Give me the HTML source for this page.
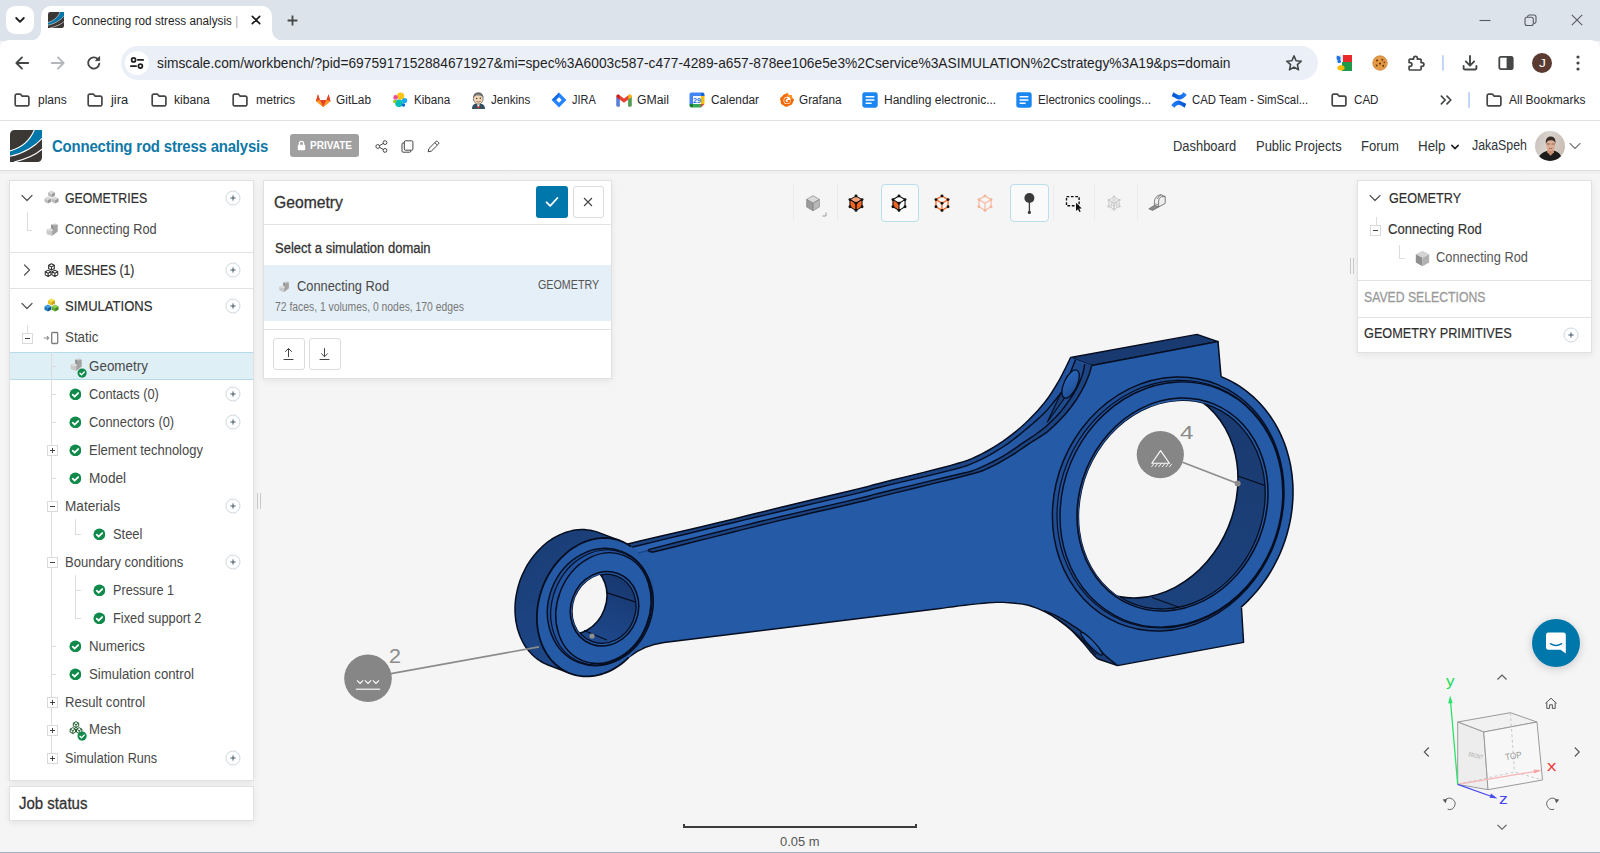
<!DOCTYPE html>
<html lang="en"><head><meta charset="utf-8"><title>Connecting rod stress analysis | SimScale</title>
<style>
html,body{margin:0;padding:0;}
body{width:1600px;height:853px;overflow:hidden;background:#f5f5f5;font-family:"Liberation Sans",sans-serif;}
#root{position:relative;width:1600px;height:853px;overflow:hidden;background:#f5f5f5;}
.a{position:absolute;display:block;}
.t{position:absolute;white-space:pre;transform-origin:0 50%;}
.p{position:absolute;background:#fff;border:1px solid #e1e1e1;box-sizing:border-box;box-shadow:0 2px 7px rgba(0,0,0,.07);}
</style></head>
<body><div id="root">
<!-- viewer_ui -->
<svg class="a" style="left:0;top:0" width="1600" height="853" viewBox="0 0 1600 853"><defs><linearGradient id="wallB" x1="0" y1="0" x2="0" y2="1"><stop offset="0" stop-color="#1a3b71"/><stop offset="1" stop-color="#1c427d"/></linearGradient><linearGradient id="wallS" x1="0" y1="0" x2="0" y2="1"><stop offset="0" stop-color="#183870"/><stop offset="1" stop-color="#1e498c"/></linearGradient><linearGradient id="sideS" x1="0" y1="0" x2="0.6" y2="1"><stop offset="0" stop-color="#193b72"/><stop offset="1" stop-color="#1f4b8e"/></linearGradient><linearGradient id="bolt" x1="0" y1="0" x2="1" y2="1"><stop offset="0" stop-color="#2c69bd"/><stop offset="1" stop-color="#1e4d94"/></linearGradient></defs>
<path d="M1070.6 357.5 L1197.0 334.4 L1218.0 341.6 L1091.7 365.6 L1084.9 364.3 L1075.4 360.2Z" fill="#193a70" stroke="none" stroke-width="1.3" stroke-linejoin="round" />
<path d="M1070.6 357.5 L1197.0 334.4 L1218.0 341.6 L1091.7 365.6Z" fill="none" stroke="#060d1f" stroke-width="1.43" stroke-linejoin="round" />
<path d="M600.0 550.6 L604.8 549.4 L611.2 547.9 L619.2 546.0 L628.8 543.7 L640.0 541.0 L653.8 537.8 L670.1 534.0 L687.5 529.9 L704.6 525.9 L720.0 522.3 L733.0 519.2 L744.5 516.3 L755.5 513.5 L767.0 510.7 L780.0 507.5 L795.7 503.7 L813.4 499.5 L831.4 495.2 L847.5 491.4 L860.0 488.4 L867.0 486.7 L869.9 485.9 L871.3 485.5 L873.8 484.8 L880.0 483.2 L891.5 480.3 L906.5 476.6 L922.7 472.6 L938.0 468.8 L950.0 465.6 L958.1 463.3 L963.7 461.6 L967.9 460.2 L971.8 458.6 L976.4 456.5 L981.8 453.9 L987.2 451.0 L992.6 447.8 L997.8 444.6 L1002.8 441.3 L1007.6 437.9 L1012.2 434.4 L1016.7 430.8 L1020.9 427.2 L1024.8 423.7 L1028.4 420.3 L1031.8 416.9 L1035.0 413.6 L1037.9 410.4 L1040.6 407.3 L1043.0 404.4 L1045.2 401.8 L1047.1 399.2 L1049.1 396.5 L1051.1 393.5 L1053.2 390.2 L1055.4 386.6 L1057.6 383.0 L1059.7 379.3 L1061.7 375.6 L1063.7 371.7 L1065.8 367.5 L1067.8 363.4 L1069.4 360.0 L1070.6 357.5 L1091.7 365.6 L1100.0 560.0 L940.0 598.0 L664.0 634.0 L600.0 648.0Z" fill="#245aa6" stroke="none" stroke-width="1.3" stroke-linejoin="round" />
<linearGradient id="stripO" gradientUnits="userSpaceOnUse" x1="940" y1="0" x2="1070" y2="0"><stop offset="0" stop-color="#1c4482"/><stop offset="1" stop-color="#2255a2"/></linearGradient>
<path d="M600.0 550.6 L604.8 549.4 L611.2 547.9 L619.2 546.0 L628.8 543.7 L640.0 541.0 L653.8 537.8 L670.1 534.0 L687.5 529.9 L704.6 525.9 L720.0 522.3 L733.0 519.2 L744.5 516.3 L755.5 513.5 L767.0 510.7 L780.0 507.5 L795.7 503.7 L813.4 499.5 L831.4 495.2 L847.5 491.4 L860.0 488.4 L867.0 486.7 L869.9 485.9 L871.3 485.5 L873.8 484.8 L880.0 483.2 L891.5 480.3 L906.5 476.6 L922.7 472.6 L938.0 468.8 L950.0 465.6 L958.1 463.3 L963.7 461.6 L967.9 460.2 L971.8 458.6 L976.4 456.5 L981.8 453.9 L987.2 451.0 L992.6 447.8 L997.8 444.6 L1002.8 441.3 L1007.6 437.9 L1012.2 434.4 L1016.7 430.8 L1020.9 427.2 L1024.8 423.7 L1028.4 420.3 L1031.8 416.9 L1035.0 413.6 L1037.9 410.4 L1040.6 407.3 L1043.0 404.4 L1045.2 401.8 L1047.1 399.2 L1049.1 396.5 L1051.1 393.5 L1053.2 390.2 L1055.4 386.6 L1057.6 383.0 L1059.7 379.3 L1061.7 375.6 L1063.7 371.7 L1065.8 367.5 L1067.8 363.4 L1069.4 360.0 L1070.6 357.5 L1075.4 359.8 L1074.7 361.7 L1073.7 364.3 L1072.5 367.4 L1071.2 370.5 L1070.1 373.5 L1069.1 376.3 L1068.1 379.1 L1067.1 381.9 L1066.1 384.6 L1064.8 387.2 L1063.4 389.6 L1061.9 391.8 L1060.2 394.0 L1058.4 396.3 L1056.4 398.8 L1054.2 401.5 L1051.9 404.4 L1049.4 407.4 L1046.7 410.5 L1043.7 413.6 L1040.4 416.8 L1036.7 420.1 L1032.9 423.5 L1028.9 426.9 L1024.8 430.3 L1020.7 433.7 L1016.4 437.1 L1012.1 440.5 L1007.5 443.8 L1002.8 447.0 L997.8 450.1 L992.6 453.3 L987.2 456.3 L981.8 459.1 L976.4 461.6 L971.8 463.6 L967.9 465.2 L963.7 466.6 L958.1 468.2 L950.0 470.4 L938.0 473.4 L922.7 477.1 L906.5 480.9 L891.5 484.4 L880.0 487.2 L873.8 488.8 L871.3 489.5 L869.9 490.0 L867.0 490.8 L860.0 492.6 L847.5 495.6 L831.4 499.4 L813.4 503.6 L795.7 507.8 L780.0 511.5 L767.0 514.6 L755.5 517.3 L744.5 519.9 L733.0 522.7 L720.0 525.8 L704.6 529.5 L687.5 533.7 L670.1 537.9 L653.8 541.9 L640.0 545.2 L628.8 547.9 L619.2 550.3 L611.2 552.2 L604.8 553.8 L600.0 555.0Z" fill="url(#stripO)" stroke="none" stroke-width="1.3" stroke-linejoin="round" />
<linearGradient id="stripM" gradientUnits="userSpaceOnUse" x1="990" y1="0" x2="1062" y2="0"><stop offset="0" stop-color="#2960b0"/><stop offset="1" stop-color="#1e4a8e"/></linearGradient>
<path d="M600.0 555.0 L604.8 553.8 L611.2 552.2 L619.2 550.3 L628.8 547.9 L640.0 545.2 L653.8 541.9 L670.1 537.9 L687.5 533.7 L704.6 529.5 L720.0 525.8 L733.0 522.7 L744.5 519.9 L755.5 517.3 L767.0 514.6 L780.0 511.5 L795.7 507.8 L813.4 503.6 L831.4 499.4 L847.5 495.6 L860.0 492.6 L867.0 490.8 L869.9 490.0 L871.3 489.5 L873.8 488.8 L880.0 487.2 L891.5 484.4 L906.5 480.9 L922.7 477.1 L938.0 473.4 L950.0 470.4 L958.1 468.2 L963.7 466.6 L967.9 465.2 L971.8 463.6 L976.4 461.6 L981.8 459.1 L987.2 456.3 L992.6 453.3 L997.8 450.1 L1002.8 447.0 L1007.5 443.8 L1012.1 440.5 L1016.4 437.1 L1020.7 433.7 L1024.8 430.3 L1028.9 426.9 L1032.9 423.5 L1036.7 420.1 L1040.4 416.8 L1043.7 413.6 L1046.7 410.5 L1049.4 407.4 L1051.9 404.4 L1054.2 401.5 L1056.4 398.8 L1058.4 396.3 L1060.2 394.0 L1061.9 391.8 L1063.4 389.6 L1064.8 387.2 L1066.1 384.6 L1067.1 381.9 L1068.1 379.1 L1069.1 376.3 L1070.1 373.5 L1071.2 370.5 L1072.5 367.4 L1073.7 364.3 L1074.7 361.7 L1075.4 359.8 L1084.9 364.0 L1084.5 365.7 L1084.1 368.0 L1083.4 370.8 L1082.7 373.8 L1081.7 376.7 L1080.6 379.6 L1079.3 382.7 L1077.8 385.9 L1076.2 389.2 L1074.3 392.5 L1072.1 396.0 L1069.7 399.7 L1067.1 403.4 L1064.4 407.0 L1061.7 410.4 L1059.0 413.6 L1056.2 416.7 L1053.3 419.6 L1050.5 422.3 L1047.9 424.8 L1045.4 427.0 L1043.1 428.9 L1040.8 430.7 L1038.6 432.3 L1036.3 434.0 L1034.2 435.5 L1032.2 436.8 L1030.2 438.1 L1027.8 439.7 L1024.8 441.6 L1021.1 444.1 L1017.0 447.1 L1012.4 450.2 L1007.6 453.4 L1002.8 456.3 L997.7 459.1 L992.3 462.0 L986.8 464.7 L981.4 467.2 L976.4 469.3 L972.7 470.7 L970.2 471.5 L967.4 472.2 L962.9 473.2 L955.3 475.0 L942.8 478.0 L926.4 481.9 L908.7 486.1 L892.4 490.0 L880.0 493.0 L873.4 494.6 L870.9 495.4 L869.7 495.8 L867.0 496.5 L860.0 498.2 L847.5 501.1 L831.4 504.9 L813.4 509.0 L795.7 513.1 L780.0 516.8 L766.9 519.9 L755.0 522.8 L743.8 525.6 L732.3 528.4 L720.0 531.5 L706.3 534.9 L691.8 538.6 L677.0 542.3 L662.9 545.9 L650.0 549.2 L637.9 552.4 L626.2 555.6 L615.4 558.6 L606.5 561.1 L600.0 562.9Z" fill="url(#stripM)" stroke="none" stroke-width="1.3" stroke-linejoin="round" />
<path d="M600.0 562.9 L606.5 561.1 L615.4 558.6 L626.2 555.6 L637.9 552.4 L650.0 549.2 L662.9 545.9 L677.0 542.3 L691.8 538.6 L706.3 534.9 L720.0 531.5 L732.3 528.4 L743.8 525.6 L755.0 522.8 L766.9 519.9 L780.0 516.8 L795.7 513.1 L813.4 509.0 L831.4 504.9 L847.5 501.1 L860.0 498.2 L867.0 496.5 L869.7 495.8 L870.9 495.4 L873.4 494.6 L880.0 493.0 L892.4 490.0 L908.7 486.1 L926.4 481.9 L942.8 478.0 L955.3 475.0 L962.9 473.2 L967.4 472.2 L970.2 471.5 L972.7 470.7 L976.4 469.3 L981.4 467.2 L986.8 464.7 L992.3 462.0 L997.7 459.1 L1002.8 456.3 L1007.6 453.4 L1012.4 450.2 L1017.0 447.1 L1021.1 444.1 L1024.8 441.6 L1027.8 439.7 L1030.2 438.1 L1032.2 436.8 L1034.2 435.5 L1036.3 434.0 L1038.6 432.3 L1040.8 430.7 L1043.1 428.9 L1045.4 427.0 L1047.9 424.8 L1050.5 422.3 L1053.3 419.6 L1056.2 416.7 L1059.0 413.6 L1061.7 410.4 L1064.4 407.0 L1067.1 403.4 L1069.7 399.7 L1072.1 396.0 L1074.3 392.5 L1076.2 389.2 L1077.8 385.9 L1079.3 382.7 L1080.6 379.6 L1081.7 376.7 L1082.7 373.8 L1083.4 370.8 L1084.1 368.0 L1084.5 365.7 L1084.9 364.0 L1091.7 365.6 L1091.1 367.5 L1090.4 370.1 L1089.5 373.2 L1088.3 376.5 L1087.0 379.8 L1085.5 383.2 L1083.7 386.8 L1081.8 390.5 L1079.7 394.2 L1077.5 397.8 L1075.2 401.3 L1072.7 404.8 L1070.1 408.2 L1067.5 411.5 L1064.8 414.7 L1062.0 417.8 L1059.1 420.8 L1056.2 423.6 L1053.5 426.2 L1051.1 428.4 L1049.3 430.0 L1048.0 431.2 L1046.9 432.1 L1045.5 433.1 L1043.7 434.4 L1041.3 436.0 L1038.6 437.7 L1035.6 439.6 L1032.4 441.5 L1029.2 443.6 L1025.9 445.8 L1022.6 448.1 L1019.1 450.5 L1015.5 453.0 L1011.6 455.4 L1007.5 457.9 L1003.1 460.4 L998.6 463.0 L994.1 465.4 L989.6 467.5 L986.2 469.1 L983.9 470.2 L981.1 471.2 L976.2 472.7 L967.6 475.0 L953.2 478.7 L934.0 483.4 L913.3 488.5 L894.2 493.1 L880.0 496.6 L872.6 498.5 L870.0 499.2 L869.1 499.5 L866.8 500.2 L860.0 501.8 L847.5 504.7 L831.4 508.4 L813.4 512.6 L795.7 516.7 L780.0 520.4 L766.8 523.6 L754.9 526.6 L743.6 529.4 L732.2 532.3 L720.0 535.4 L705.9 538.9 L690.3 542.8 L674.9 546.7 L661.6 550.0 L652.0 552.2 L648.0 552.9 L648.3 552.5 L650.4 551.5 L651.5 550.9 L649.0 551.2 L641.4 553.0 L630.4 555.6 L618.3 558.6 L607.4 561.4 L600.0 563.2Z" fill="#1c4482" stroke="none" stroke-width="1.3" stroke-linejoin="round" />
<path d="M1042.4 610.6 L1045.6 612.1 L1048.8 613.8 L1052.0 615.7 L1055.2 617.8 L1058.4 620.0 L1061.6 622.3 L1064.7 624.6 L1067.5 626.9 L1070.2 629.2 L1072.7 631.6 L1075.1 634.1 L1077.4 636.5 L1079.6 638.8 L1081.6 641.0 L1083.5 643.1 L1085.2 645.1 L1086.8 647.1 L1088.3 648.9 L1089.7 650.6 L1091.0 652.2 L1092.3 653.6 L1093.6 655.0 L1094.8 656.2 L1095.9 657.3 L1096.8 658.1 L1097.5 658.8 L1117.5 665.6 L1116.4 664.7 L1114.8 663.4 L1112.9 661.9 L1110.9 660.3 L1108.8 658.6 L1106.9 656.9 L1105.1 655.2 L1103.3 653.4 L1101.5 651.6 L1099.6 649.7 L1097.7 647.7 L1095.7 645.7 L1093.6 643.6 L1091.5 641.3 L1089.3 639.0 L1087.1 636.8 L1084.8 634.6 L1082.5 632.5 L1080.1 630.6 L1077.5 628.7 L1074.9 626.9 L1072.3 625.3 L1069.8 623.7 L1067.5 622.2 L1065.4 620.9 L1063.4 619.7 L1061.6 618.6 L1059.7 617.5 L1057.9 616.6 L1056.0 615.6 L1053.9 614.6 L1051.6 613.6 L1049.3 612.7 L1047.1 611.8 L1045.3 611.1 L1044.0 610.6Z" fill="#1b3f79" stroke="none" stroke-width="1.3" stroke-linejoin="round" />
<path d="M600.0 563.2 L607.4 561.4 L618.3 558.6 L630.4 555.6 L641.4 553.0 L649.0 551.2 L651.5 550.9 L650.4 551.5 L648.3 552.5 L648.0 552.9 L652.0 552.2 L661.6 550.0 L674.9 546.7 L690.3 542.8 L705.9 538.9 L720.0 535.4 L732.2 532.3 L743.6 529.4 L754.9 526.6 L766.8 523.6 L780.0 520.4 L795.7 516.7 L813.4 512.6 L831.4 508.4 L847.5 504.7 L860.0 501.8 L866.8 500.2 L869.1 499.5 L870.0 499.2 L872.6 498.5 L880.0 496.6 L894.2 493.1 L913.3 488.5 L934.0 483.4 L953.2 478.7 L967.6 475.0 L976.2 472.7 L981.1 471.2 L983.9 470.2 L986.2 469.1 L989.6 467.5 L994.1 465.4 L998.6 463.0 L1003.1 460.4 L1007.5 457.9 L1011.6 455.4 L1015.5 453.0 L1019.1 450.5 L1022.6 448.1 L1025.9 445.8 L1029.2 443.6 L1032.4 441.5 L1035.6 439.6 L1038.6 437.7 L1041.3 436.0 L1043.7 434.4 L1045.5 433.1 L1046.9 432.1 L1048.0 431.2 L1049.3 430.0 L1051.1 428.4 L1053.5 426.2 L1056.2 423.6 L1059.1 420.8 L1062.0 417.8 L1064.8 414.7 L1067.5 411.5 L1070.1 408.2 L1072.7 404.8 L1075.2 401.3 L1077.5 397.8 L1079.7 394.2 L1081.8 390.5 L1083.7 386.8 L1085.5 383.2 L1087.0 379.8 L1088.3 376.5 L1089.5 373.2 L1090.4 370.1 L1091.1 367.5 L1091.7 365.6 L1218.0 341.6 L1221.0 376.0 L1220.7 376.5 L1224.6 378.1 L1228.4 379.9 L1232.2 381.9 L1235.9 384.0 L1239.5 386.2 L1243.0 388.6 L1246.4 391.1 L1249.7 393.8 L1253.0 396.6 L1256.1 399.5 L1259.1 402.5 L1262.0 405.7 L1264.8 409.0 L1267.5 412.4 L1270.1 416.0 L1272.5 419.6 L1274.9 423.4 L1277.0 427.2 L1279.1 431.1 L1281.0 435.2 L1282.8 439.3 L1284.5 443.5 L1286.0 447.7 L1287.3 452.1 L1288.5 456.5 L1289.6 460.9 L1290.6 465.4 L1291.3 470.0 L1292.0 474.6 L1292.4 479.2 L1292.8 483.9 L1293.0 488.6 L1293.0 493.3 L1292.9 498.1 L1292.6 502.8 L1292.2 507.5 L1291.6 512.3 L1290.9 517.0 L1290.0 521.7 L1289.0 526.4 L1287.8 531.0 L1286.5 535.7 L1285.1 540.3 L1283.5 544.8 L1281.8 549.3 L1279.9 553.7 L1277.9 558.1 L1275.7 562.4 L1273.5 566.7 L1271.1 570.9 L1268.6 575.0 L1265.9 579.0 L1263.2 582.9 L1260.3 586.7 L1257.3 590.4 L1254.2 594.0 L1251.0 597.5 L1247.8 600.9 L1244.4 604.2 L1240.9 607.3 L1241.5 608.0 L1243.6 642.4 L1117.5 665.6 L1116.4 664.7 L1114.8 663.4 L1112.9 661.9 L1110.9 660.3 L1108.8 658.6 L1106.9 656.9 L1105.1 655.2 L1103.3 653.4 L1101.5 651.6 L1099.6 649.7 L1097.7 647.7 L1095.7 645.7 L1093.6 643.6 L1091.5 641.3 L1089.3 639.0 L1087.1 636.8 L1084.8 634.6 L1082.5 632.5 L1080.1 630.6 L1077.5 628.7 L1074.9 626.9 L1072.3 625.3 L1069.8 623.7 L1067.5 622.2 L1065.4 620.9 L1063.4 619.7 L1061.6 618.6 L1059.7 617.5 L1057.9 616.6 L1056.0 615.6 L1053.9 614.6 L1051.6 613.6 L1049.3 612.7 L1047.1 611.8 L1045.3 611.1 L1044.0 610.6 L1042.4 610.6 L1039.2 609.1 L1036.0 607.9 L1032.9 606.8 L1030.0 605.8 L1027.3 605.0 L1024.9 604.5 L1022.5 604.1 L1020.1 603.8 L1017.7 603.6 L1015.0 603.3 L1012.2 603.0 L1009.3 602.8 L1006.4 602.6 L1003.2 602.4 L999.9 602.4 L996.3 602.4 L992.4 602.6 L988.2 602.8 L983.9 603.2 L979.3 603.6 L974.7 604.1 L970.0 604.6 L964.9 605.2 L959.2 605.9 L953.4 606.7 L947.9 607.4 L943.3 608.1 L940.0 608.5 L664.0 642.6 L652.0 644.6 L641.0 648.6 L628.8 657.3 L600.0 662.0Z" fill="#245aa6" stroke="none" stroke-width="1.3" stroke-linejoin="round" />
<ellipse cx="1169.50" cy="504.50" rx="120.87" ry="137.85" transform="rotate(22.5 1169.50 504.50)" fill="#245aa6" stroke="none" stroke-width="1.3" />
<path d="M600.0 550.6 L604.8 549.4 L611.2 547.9 L619.2 546.0 L628.8 543.7 L640.0 541.0 L653.8 537.8 L670.1 534.0 L687.5 529.9 L704.6 525.9 L720.0 522.3 L733.0 519.2 L744.5 516.3 L755.5 513.5 L767.0 510.7 L780.0 507.5 L795.7 503.7 L813.4 499.5 L831.4 495.2 L847.5 491.4 L860.0 488.4 L867.0 486.7 L869.9 485.9 L871.3 485.5 L873.8 484.8 L880.0 483.2 L891.5 480.3 L906.5 476.6 L922.7 472.6 L938.0 468.8 L950.0 465.6 L958.1 463.3 L963.7 461.6 L967.9 460.2 L971.8 458.6 L976.4 456.5 L981.8 453.9 L987.2 451.0 L992.6 447.8 L997.8 444.6 L1002.8 441.3 L1007.6 437.9 L1012.2 434.4 L1016.7 430.8 L1020.9 427.2 L1024.8 423.7 L1028.4 420.3 L1031.8 416.9 L1035.0 413.6 L1037.9 410.4 L1040.6 407.3 L1043.0 404.4 L1045.2 401.8 L1047.1 399.2 L1049.1 396.5 L1051.1 393.5 L1053.2 390.2 L1055.4 386.6 L1057.6 383.0 L1059.7 379.3 L1061.7 375.6 L1063.7 371.7 L1065.8 367.5 L1067.8 363.4 L1069.4 360.0 L1070.6 357.5" fill="none" stroke="#060d1f" stroke-width="1.49" stroke-linejoin="round" />
<path d="M600.0 555.0 L604.8 553.8 L611.2 552.2 L619.2 550.3 L628.8 547.9 L640.0 545.2 L653.8 541.9 L670.1 537.9 L687.5 533.7 L704.6 529.5 L720.0 525.8 L733.0 522.7 L744.5 519.9 L755.5 517.3 L767.0 514.6 L780.0 511.5 L795.7 507.8 L813.4 503.6 L831.4 499.4 L847.5 495.6 L860.0 492.6 L867.0 490.8 L869.9 490.0 L871.3 489.5 L873.8 488.8 L880.0 487.2 L891.5 484.4 L906.5 480.9 L922.7 477.1 L938.0 473.4 L950.0 470.4 L958.1 468.2 L963.7 466.6 L967.9 465.2 L971.8 463.6 L976.4 461.6 L981.8 459.1 L987.2 456.3 L992.6 453.3 L997.8 450.1 L1002.8 447.0 L1007.5 443.8 L1012.1 440.5 L1016.4 437.1 L1020.7 433.7 L1024.8 430.3 L1028.9 426.9 L1032.9 423.5 L1036.7 420.1 L1040.4 416.8 L1043.7 413.6 L1046.7 410.5 L1049.4 407.4 L1051.9 404.4 L1054.2 401.5 L1056.4 398.8 L1058.4 396.3 L1060.2 394.0 L1061.9 391.8 L1063.4 389.6 L1064.8 387.2 L1066.1 384.6 L1067.1 381.9 L1068.1 379.1 L1069.1 376.3 L1070.1 373.5 L1071.2 370.5 L1072.5 367.4 L1073.7 364.3 L1074.7 361.7 L1075.4 359.8" fill="none" stroke="#060d1f" stroke-width="1.43" stroke-linejoin="round" />
<path d="M650.0 549.2 L662.9 545.9 L677.0 542.3 L691.8 538.6 L706.3 534.9 L720.0 531.5 L732.3 528.4 L743.8 525.6 L755.0 522.8 L766.9 519.9 L780.0 516.8 L795.7 513.1 L813.4 509.0 L831.4 504.9 L847.5 501.1 L860.0 498.2 L867.0 496.5 L869.7 495.8 L870.9 495.4 L873.4 494.6 L880.0 493.0 L892.4 490.0 L908.7 486.1 L926.4 481.9 L942.8 478.0 L955.3 475.0 L962.9 473.2 L967.4 472.2 L970.2 471.5 L972.7 470.7 L976.4 469.3 L981.4 467.2 L986.8 464.7 L992.3 462.0 L997.7 459.1 L1002.8 456.3 L1007.6 453.4 L1012.4 450.2 L1017.0 447.1 L1021.1 444.1 L1024.8 441.6 L1027.8 439.7 L1030.2 438.1 L1032.2 436.8 L1034.2 435.5 L1036.3 434.0 L1038.6 432.3 L1040.8 430.7 L1043.1 428.9 L1045.4 427.0 L1047.9 424.8 L1050.5 422.3 L1053.3 419.6 L1056.2 416.7 L1059.0 413.6 L1061.7 410.4 L1064.4 407.0 L1067.1 403.4 L1069.7 399.7 L1072.1 396.0 L1074.3 392.5 L1076.2 389.2 L1077.8 385.9 L1079.3 382.7 L1080.6 379.6 L1081.7 376.7 L1082.7 373.8 L1083.4 370.8 L1084.1 368.0 L1084.5 365.7 L1084.9 364.0" fill="none" stroke="#060d1f" stroke-width="1.43" stroke-linejoin="round" />
<path d="M652.0 552.2 L661.6 550.0 L674.9 546.7 L690.3 542.8 L705.9 538.9 L720.0 535.4 L732.2 532.3 L743.6 529.4 L754.9 526.6 L766.8 523.6 L780.0 520.4 L795.7 516.7 L813.4 512.6 L831.4 508.4 L847.5 504.7 L860.0 501.8 L866.8 500.2 L869.1 499.5 L870.0 499.2 L872.6 498.5 L880.0 496.6 L894.2 493.1 L913.3 488.5 L934.0 483.4 L953.2 478.7 L967.6 475.0 L976.2 472.7 L981.1 471.2 L983.9 470.2 L986.2 469.1 L989.6 467.5 L994.1 465.4 L998.6 463.0 L1003.1 460.4 L1007.5 457.9 L1011.6 455.4 L1015.5 453.0 L1019.1 450.5 L1022.6 448.1 L1025.9 445.8 L1029.2 443.6 L1032.4 441.5 L1035.6 439.6 L1038.6 437.7 L1041.3 436.0 L1043.7 434.4 L1045.5 433.1 L1046.9 432.1 L1048.0 431.2 L1049.3 430.0 L1051.1 428.4 L1053.5 426.2 L1056.2 423.6 L1059.1 420.8 L1062.0 417.8 L1064.8 414.7 L1067.5 411.5 L1070.1 408.2 L1072.7 404.8 L1075.2 401.3 L1077.5 397.8 L1079.7 394.2 L1081.8 390.5 L1083.7 386.8 L1085.5 383.2 L1087.0 379.8 L1088.3 376.5 L1089.5 373.2 L1090.4 370.1 L1091.1 367.5 L1091.7 365.6" fill="none" stroke="#060d1f" stroke-width="1.49" stroke-linejoin="round" />
<path d="M650 549.2 Q645.5 550.6 652 552.2" fill="none" stroke="#060d1f" stroke-width="1.3" stroke-linejoin="round" />
<path d="M1061.7 391.4 L1047.4 422 L1064.8 397.8Z" fill="#1a3f78" stroke="#060d1f" stroke-width="1.1" stroke-linejoin="round"/>
<ellipse cx="1070.6" cy="384" rx="6.6" ry="15.1" transform="rotate(24.6 1070.6 384)" fill="url(#bolt)" stroke="#060d1f" stroke-width="1.3"/>
<path d="M1091.7 365.6 L1218.0 341.6 L1221.0 376.0" fill="none" stroke="#060d1f" stroke-width="1.49" stroke-linejoin="round" />
<path d="M1220.7 376.5 L1224.6 378.1 L1228.4 379.9 L1232.2 381.9 L1235.9 384.0 L1239.5 386.2 L1243.0 388.6 L1246.4 391.1 L1249.7 393.8 L1253.0 396.6 L1256.1 399.5 L1259.1 402.5 L1262.0 405.7 L1264.8 409.0 L1267.5 412.4 L1270.1 416.0 L1272.5 419.6 L1274.9 423.4 L1277.0 427.2 L1279.1 431.1 L1281.0 435.2 L1282.8 439.3 L1284.5 443.5 L1286.0 447.7 L1287.3 452.1 L1288.5 456.5 L1289.6 460.9 L1290.6 465.4 L1291.3 470.0 L1292.0 474.6 L1292.4 479.2 L1292.8 483.9 L1293.0 488.6 L1293.0 493.3 L1292.9 498.1 L1292.6 502.8 L1292.2 507.5 L1291.6 512.3 L1290.9 517.0 L1290.0 521.7 L1289.0 526.4 L1287.8 531.0 L1286.5 535.7 L1285.1 540.3 L1283.5 544.8 L1281.8 549.3 L1279.9 553.7 L1277.9 558.1 L1275.7 562.4 L1273.5 566.7 L1271.1 570.9 L1268.6 575.0 L1265.9 579.0 L1263.2 582.9 L1260.3 586.7 L1257.3 590.4 L1254.2 594.0 L1251.0 597.5 L1247.8 600.9 L1244.4 604.2 L1240.9 607.3" fill="none" stroke="#060d1f" stroke-width="1.56" stroke-linejoin="round" />
<path d="M1241.5 608.0 L1243.6 642.4 L1117.5 665.6" fill="none" stroke="#060d1f" stroke-width="1.43" stroke-linejoin="round" />
<path d="M940.0 608.5 L943.3 608.1 L947.9 607.4 L953.4 606.7 L959.2 605.9 L964.9 605.2 L970.0 604.6 L974.7 604.1 L979.3 603.6 L983.9 603.2 L988.2 602.8 L992.4 602.6 L996.3 602.4 L999.9 602.4 L1003.2 602.4 L1006.4 602.6 L1009.3 602.8 L1012.2 603.0 L1015.0 603.3 L1017.7 603.6 L1020.1 603.8 L1022.5 604.1 L1024.9 604.5 L1027.3 605.0 L1030.0 605.8 L1032.9 606.8 L1036.0 607.9 L1039.2 609.1 L1042.4 610.6 L1045.6 612.1 L1048.8 613.8 L1052.0 615.7 L1055.2 617.8 L1058.4 620.0 L1061.6 622.3 L1064.7 624.6 L1067.5 626.9 L1070.2 629.2 L1072.7 631.6 L1075.1 634.1 L1077.4 636.5 L1079.6 638.8 L1081.6 641.0 L1083.5 643.1 L1085.2 645.1 L1086.8 647.1 L1088.3 648.9 L1089.7 650.6 L1091.0 652.2 L1092.3 653.6 L1093.6 655.0 L1094.8 656.2 L1095.9 657.3 L1096.8 658.1 L1097.5 658.8" fill="none" stroke="#060d1f" stroke-width="1.43" stroke-linejoin="round" />
<path d="M1044.0 610.6 L1045.3 611.1 L1047.1 611.8 L1049.3 612.7 L1051.6 613.6 L1053.9 614.6 L1056.0 615.6 L1057.9 616.6 L1059.7 617.5 L1061.6 618.6 L1063.4 619.7 L1065.4 620.9 L1067.5 622.2 L1069.8 623.7 L1072.3 625.3 L1074.9 626.9 L1077.5 628.7 L1080.1 630.6 L1082.5 632.5 L1084.8 634.6 L1087.1 636.8 L1089.3 639.0 L1091.5 641.3 L1093.6 643.6 L1095.7 645.7 L1097.7 647.7 L1099.6 649.7 L1101.5 651.6 L1103.3 653.4 L1105.1 655.2 L1106.9 656.9 L1108.8 658.6 L1110.9 660.3 L1112.9 661.9 L1114.8 663.4 L1116.4 664.7 L1117.5 665.6" fill="none" stroke="#060d1f" stroke-width="1.43" stroke-linejoin="round" />
<path d="M1097.5 658.8 L1117.5 665.6" fill="none" stroke="#060d1f" stroke-width="1.43" stroke-linejoin="round" />
<path d="M1058 619.5 Q1078 633 1096 655" fill="none" stroke="#060d1f" stroke-width="1.17" stroke-linejoin="round" />
<ellipse cx="1091.7" cy="643.8" rx="15.4" ry="2.9" transform="rotate(46.8 1091.7 643.8)" fill="url(#bolt)" stroke="#060d1f" stroke-width="1.2"/>
<path d="M940 608.5 L664 642.6 C651 644.3 640 648 628.8 657.3" fill="none" stroke="#060d1f" stroke-width="1.49" stroke-linejoin="round" />
<ellipse cx="1168.20" cy="504.00" rx="113.34" ry="129.20" transform="rotate(22.5 1168.20 504.00)" fill="#1f4e95" stroke="#060d1f" stroke-width="1.43" />
<ellipse cx="1170.20" cy="504.20" rx="110.88" ry="125.88" transform="rotate(22.5 1170.20 504.20)" fill="#2153a0" stroke="#060d1f" stroke-width="1.17" />
<ellipse cx="1171.40" cy="504.50" rx="108.94" ry="124.79" transform="rotate(22.5 1171.40 504.50)" fill="#245aa6" stroke="#060d1f" stroke-width="1.43" />
<ellipse cx="1172.50" cy="504.50" rx="93.06" ry="108.64" transform="rotate(22.5 1172.50 504.50)" fill="#245aa6" stroke="#060d1f" stroke-width="1.56" />
<clipPath id="clipHC"><ellipse cx="1172.20" cy="505.00" rx="90.55" ry="106.14" transform="rotate(22.5 1172.20 505.00)"/></clipPath>
<ellipse cx="1172.20" cy="505.00" rx="90.55" ry="106.14" transform="rotate(22.5 1172.20 505.00)" fill="url(#wallB)" stroke="#060d1f" stroke-width="1.3" />
<g clip-path="url(#clipHC)"><ellipse cx="1146.00" cy="493.00" rx="89.07" ry="107.50" transform="rotate(22.5 1146.00 493.00)" fill="#f5f5f5" stroke="#060d1f" stroke-width="1.56" /><path d="M1238.0 476.0 L1266.0 486.0" fill="none" stroke="#060d1f" stroke-width="1.3" stroke-linejoin="round" /><path d="M1152.0 597.5 L1181.0 608.0" fill="none" stroke="#060d1f" stroke-width="1.3" stroke-linejoin="round" /></g>
<path d="M515.0 610.8 L515.0 607.2 L515.2 603.6 L515.5 600.0 L516.0 596.4 L516.7 592.8 L517.5 589.2 L518.4 585.6 L519.5 582.1 L520.8 578.6 L522.2 575.1 L523.8 571.8 L525.4 568.5 L527.2 565.2 L529.2 562.1 L531.2 559.1 L533.4 556.2 L535.7 553.4 L538.1 550.7 L540.6 548.2 L543.1 545.8 L545.8 543.5 L548.5 541.4 L551.3 539.5 L554.2 537.7 L557.1 536.1 L560.1 534.6 L563.1 533.4 L566.1 532.3 L569.1 531.4 L572.2 530.6 L575.3 530.1 L578.3 529.8 L581.4 529.6 L584.4 529.6 L587.4 529.9 L590.4 530.3 L593.3 530.9 L596.1 531.6 L598.9 532.6 L620.8 541.0 L623.5 542.2 L626.2 543.5 L628.7 545.0 L631.2 546.7 L633.6 548.5 L635.8 550.5 L638.0 552.7 L640.0 555.0 L642.0 557.4 L643.8 560.0 L645.4 562.7 L646.9 565.5 L648.3 568.5 L649.5 571.6 L650.6 574.7 L651.6 578.0 L652.3 581.3 L653.0 584.7 L653.4 588.1 L653.7 591.6 L653.9 595.2 L653.9 598.8 L653.7 602.4 L653.4 606.0 L652.9 609.6 L652.2 613.2 L651.4 616.8 L650.5 620.4 L649.4 623.9 L648.1 627.4 L646.7 630.9 L645.1 634.2 L643.5 637.5 L641.7 640.8 L639.7 643.9 L637.7 646.9 L635.5 649.8 L633.2 652.6 L630.8 655.3 L628.3 657.8 L625.8 660.2 L623.1 662.5 L620.4 664.6 L617.6 666.5 L614.7 668.3 L611.8 669.9 L608.8 671.4 L605.8 672.6 L602.8 673.7 L599.8 674.6 L596.7 675.4 L593.6 675.9 L590.6 676.2 L587.5 676.4 L584.5 676.4 L581.5 676.1 L578.5 675.7 L575.6 675.1 L572.8 674.4 L570.0 673.4 L548.1 665.0 L545.4 663.8 L542.7 662.5 L540.2 661.0 L537.7 659.3 L535.3 657.5 L533.1 655.5 L530.9 653.3 L528.9 651.0 L526.9 648.6 L525.1 646.0 L523.5 643.3 L522.0 640.5 L520.6 637.5 L519.4 634.4 L518.3 631.3 L517.3 628.0 L516.6 624.7 L515.9 621.3 L515.5 617.9 L515.2 614.4Z" fill="url(#sideS)" stroke="none" stroke-width="1.3" stroke-linejoin="round" />
<path d="M570.0 673.4 L548.1 665.0 L545.4 663.8 L542.7 662.5 L540.2 661.0 L537.7 659.3 L535.3 657.5 L533.1 655.5 L530.9 653.3 L528.9 651.0 L526.9 648.6 L525.1 646.0 L523.5 643.3 L522.0 640.5 L520.6 637.5 L519.4 634.4 L518.3 631.3 L517.3 628.0 L516.6 624.7 L515.9 621.3 L515.5 617.9 L515.2 614.4 L515.0 610.8 L515.0 607.2 L515.2 603.6 L515.5 600.0 L516.0 596.4 L516.7 592.8 L517.5 589.2 L518.4 585.6 L519.5 582.1 L520.8 578.6 L522.2 575.1 L523.8 571.8 L525.4 568.5 L527.2 565.2 L529.2 562.1 L531.2 559.1 L533.4 556.2 L535.7 553.4 L538.1 550.7 L540.6 548.2 L543.1 545.8 L545.8 543.5 L548.5 541.4 L551.3 539.5 L554.2 537.7 L557.1 536.1 L560.1 534.6 L563.1 533.4 L566.1 532.3 L569.1 531.4 L572.2 530.6 L575.3 530.1 L578.3 529.8 L581.4 529.6 L584.4 529.6 L587.4 529.9 L590.4 530.3 L593.3 530.9 L596.1 531.6 L598.9 532.6 L620.8 541.0" fill="none" stroke="#060d1f" stroke-width="1.49" stroke-linejoin="round" />
<ellipse cx="595.40" cy="607.20" rx="56.45" ry="70.89" transform="rotate(21 595.40 607.20)" fill="#245aa6" stroke="none" stroke-width="1.3" />
<path d="M628.8 657.3 L626.1 659.9 L623.4 662.2 L620.5 664.5 L617.6 666.5 L614.5 668.4 L611.5 670.1 L608.4 671.6 L605.2 672.9 L602.0 674.0 L598.8 674.9 L595.6 675.6 L592.4 676.0 L589.2 676.3 L586.0 676.4 L582.8 676.3 L579.7 675.9 L576.6 675.4 L573.6 674.6 L570.6 673.6 L567.8 672.5 L565.0 671.1 L562.3 669.5 L559.7 667.8 L557.2 665.8 L554.8 663.7 L552.5 661.5 L550.4 659.0 L548.4 656.4 L546.6 653.7 L544.9 650.8 L543.3 647.8 L542.0 644.6 L540.7 641.4 L539.7 638.0 L538.8 634.5 L538.0 631.0 L537.5 627.4 L537.1 623.7 L536.9 620.0 L536.9 616.2 L537.1 612.4 L537.4 608.6 L537.9 604.8 L538.6 601.0 L539.5 597.3 L540.5 593.5 L541.7 589.8 L543.0 586.1 L544.5 582.5 L546.2 579.0 L548.0 575.6 L550.0 572.3 L552.1 569.0 L554.3 565.9 L556.7 562.9 L559.1 560.1 L561.7 557.3 L564.4 554.8 L567.2 552.4 L570.0 550.1 L573.0 548.1 L576.0 546.2 L579.0 544.5 L582.1 543.0 L585.3 541.6 L588.5 540.5 L591.7 539.6 L594.9 538.9 L598.1 538.4 L601.3 538.1 L604.5 538.0 L607.7 538.1 L610.8 538.4 L613.9 539.0 L616.9 539.7 L619.9 540.7 L622.8 541.8 L625.6 543.2 L628.3 544.7 L630.9 546.4" fill="none" stroke="#060d1f" stroke-width="1.82" stroke-linejoin="round" />
<ellipse cx="600.30" cy="607.00" rx="51.85" ry="59.53" transform="rotate(21 600.30 607.00)" fill="#1f4e95" stroke="#060d1f" stroke-width="1.43" />
<ellipse cx="601.40" cy="607.40" rx="49.31" ry="58.61" transform="rotate(21 601.40 607.40)" fill="#2153a0" stroke="#060d1f" stroke-width="1.17" />
<ellipse cx="603.40" cy="608.10" rx="46.14" ry="56.52" transform="rotate(21 603.40 608.10)" fill="#245aa6" stroke="#060d1f" stroke-width="1.43" />
<ellipse cx="604.50" cy="608.75" rx="33.65" ry="37.69" transform="rotate(21 604.50 608.75)" fill="#245aa6" stroke="#060d1f" stroke-width="1.56" />
<clipPath id="clipsHC"><ellipse cx="604.35" cy="608.80" rx="31.19" ry="34.96" transform="rotate(21 604.35 608.80)"/></clipPath>
<ellipse cx="604.35" cy="608.80" rx="31.19" ry="34.96" transform="rotate(21 604.35 608.80)" fill="url(#wallS)" stroke="#060d1f" stroke-width="1.3" />
<g clip-path="url(#clipsHC)"><ellipse cx="576.00" cy="599.00" rx="30.26" ry="35.65" transform="rotate(21 576.00 599.00)" fill="#f5f5f5" stroke="#060d1f" stroke-width="1.56" /><path d="M606.6 592.7 L636.0 602.2" fill="none" stroke="#060d1f" stroke-width="1.3" stroke-linejoin="round" /><path d="M584.0 630.5 L607.0 640.0" fill="none" stroke="#060d1f" stroke-width="1.17" stroke-linejoin="round" /></g>
<circle cx="592" cy="636" r="2.6" fill="#8f9092"/></svg>
<svg class="a" style="left:0;top:0" width="1600" height="853" viewBox="0 0 1600 853"><path d="M391 673.6 L539 646.9" stroke="#8c8c8c" stroke-width="1.6" fill="none"/><path d="M1182.5 462.3 L1237.6 483.6" stroke="#8c8c8c" stroke-width="1.6" fill="none"/><circle cx="1237.6" cy="483.6" r="3" fill="#8c8c8c"/><circle cx="368" cy="678.3" r="23.8" fill="#868686"/><circle cx="1160.3" cy="454.6" r="23.6" fill="#868686"/><path d="M357 680.4 l3.1 3 l3.1 -3 M364.9 680.4 l3.1 3 l3.1 -3 M372.8 680.4 l3.1 3 l3.1 -3" fill="none" stroke="#fff" stroke-width="1.1"/><path d="M355.8 689.2 H380.2" stroke="#fff" stroke-width="1.1"/><path d="M1160.6 450.6 L1169.4 463.2 H1151.8 Z" fill="none" stroke="#fff" stroke-width="1.1" stroke-linejoin="round"/><path d="M1151.4 467 l2.4 -3.2 m1.2 3.2 l2.4 -3.2 m1.2 3.2 l2.4 -3.2 m1.2 3.2 l2.4 -3.2 m1.2 3.2 l2.4 -3.2 m1.2 3.2 l2.4 -3.2" stroke="#fff" stroke-width=".9" fill="none"/></svg>
<span class="t" style="left:388.53px;top:644.1px;font-size:19.5px;line-height:25px;color:#8a8a8a;transform:scaleX(1.1004);">2</span>
<span class="t" style="left:1179.95px;top:420.3px;font-size:19px;line-height:25px;color:#8a8a8a;transform:scaleX(1.2762);">4</span>
<div class="a" style="left:683px;top:823.5px;width:234px;height:4px;border:2px solid #3c3c3c;border-top:none;box-sizing:border-box"></div>
<span class="t" style="left:780.06px;top:832.7px;font-size:13.4px;line-height:17px;color:#555;transform:scaleX(0.9659);">0.05 m</span>
<div class="a" style="left:793px;top:184px;width:1px;height:37px;background:#ececec"></div>
<div class="a" style="left:836.5px;top:184px;width:1px;height:37px;background:#ececec"></div>
<div class="a" style="left:1053px;top:184px;width:1px;height:37px;background:#ececec"></div>
<div class="a" style="left:1094px;top:184px;width:1px;height:37px;background:#ececec"></div>
<div class="a" style="left:1137px;top:184px;width:1px;height:37px;background:#ececec"></div>
<div class="a" style="left:880.5px;top:183.5px;width:38.5px;height:38.5px;background:#fafafa;border:1px solid #b9deec;border-radius:4px;box-sizing:border-box"></div>
<div class="a" style="left:1010.3px;top:183.5px;width:38.5px;height:38.5px;background:#fafafa;border:1px solid #b9deec;border-radius:4px;box-sizing:border-box"></div>
<svg class="a" style="left:801.5px;top:191px" width="22" height="24" viewBox="0 0 22 24" ><path d="M11.00 4.60 L17.38 8.40 L11.00 12.20 L4.62 8.40Z" fill="#d9d9d9"/><path d="M4.62 8.40 L11.00 12.20 L11.00 19.80 L4.62 16.00Z" fill="#9c9c9c"/><path d="M11.00 12.20 L17.38 8.40 L17.38 16.00 L11.00 19.80Z" fill="#b9b9b9"/><path d="M11.00 4.60 L17.38 8.40 L11.00 12.20 L4.62 8.40Z M4.62 8.40 L11.00 12.20 L11.00 19.80 L4.62 16.00Z M11.00 12.20 L17.38 8.40 L17.38 16.00 L11.00 19.80Z" fill="none" stroke="#8a8a8a" stroke-width=".7"/></svg>
<svg class="a" style="left:821.5px;top:212px" width="5" height="5" viewBox="0 0 5 5" ><path d="M0.5 4 H4 V0.5" fill="none" stroke="#999" stroke-width="1"/></svg>
<svg class="a" style="left:845px;top:191px" width="22" height="24" viewBox="0 0 22 24" ><path d="M11.00 5.00 L17.05 8.60 L11.00 12.20 L4.95 8.60Z" fill="#f9a27a"/><path d="M4.95 8.60 L11.00 12.20 L11.00 19.40 L4.95 15.80Z" fill="#f26522"/><path d="M11.00 12.20 L17.05 8.60 L17.05 15.80 L11.00 19.40Z" fill="#f26522"/><path d="M11.00 5.00 L17.05 8.60 L11.00 12.20 L4.95 8.60Z M4.95 8.60 L11.00 12.20 L11.00 19.40 L4.95 15.80Z M11.00 12.20 L17.05 8.60 L17.05 15.80 L11.00 19.40Z" fill="none" stroke="#111" stroke-width="1"/><circle cx="11.00" cy="5.00" r="1.45" fill="#111"/><circle cx="17.05" cy="8.60" r="1.45" fill="#111"/><circle cx="17.05" cy="15.80" r="1.45" fill="#111"/><circle cx="11.00" cy="19.40" r="1.45" fill="#111"/><circle cx="4.95" cy="15.80" r="1.45" fill="#111"/><circle cx="4.95" cy="8.60" r="1.45" fill="#111"/><circle cx="11.00" cy="12.20" r="1.45" fill="#111"/></svg>
<svg class="a" style="left:888.3px;top:191px" width="22" height="24" viewBox="0 0 22 24" ><path d="M11.00 5.00 L17.05 8.60 L11.00 12.20 L4.95 8.60Z" fill="#fff"/><path d="M4.95 8.60 L11.00 12.20 L11.00 19.40 L4.95 15.80Z" fill="#f26522"/><path d="M11.00 12.20 L17.05 8.60 L17.05 15.80 L11.00 19.40Z" fill="#fff"/><path d="M11.00 5.00 L17.05 8.60 L11.00 12.20 L4.95 8.60Z M4.95 8.60 L11.00 12.20 L11.00 19.40 L4.95 15.80Z M11.00 12.20 L17.05 8.60 L17.05 15.80 L11.00 19.40Z" fill="none" stroke="#111" stroke-width="1.1"/><circle cx="11.00" cy="5.00" r="1.45" fill="#111"/><circle cx="17.05" cy="8.60" r="1.45" fill="#111"/><circle cx="17.05" cy="15.80" r="1.45" fill="#111"/><circle cx="11.00" cy="19.40" r="1.45" fill="#111"/><circle cx="4.95" cy="15.80" r="1.45" fill="#111"/><circle cx="4.95" cy="8.60" r="1.45" fill="#111"/><circle cx="11.00" cy="12.20" r="1.45" fill="#111"/></svg>
<svg class="a" style="left:931px;top:191px" width="22" height="24" viewBox="0 0 22 24" ><path d="M11.00 5.00 L17.05 8.60 L11.00 12.20 L4.95 8.60Z M4.95 8.60 L11.00 12.20 L11.00 19.40 L4.95 15.80Z M11.00 12.20 L17.05 8.60 L17.05 15.80 L11.00 19.40Z" fill="none" stroke="#f26522" stroke-width="1.3"/><circle cx="11.00" cy="5.00" r="1.45" fill="#111"/><circle cx="17.05" cy="8.60" r="1.45" fill="#111"/><circle cx="17.05" cy="15.80" r="1.45" fill="#111"/><circle cx="11.00" cy="19.40" r="1.45" fill="#111"/><circle cx="4.95" cy="15.80" r="1.45" fill="#111"/><circle cx="4.95" cy="8.60" r="1.45" fill="#111"/><circle cx="11.00" cy="12.20" r="1.45" fill="#111"/></svg>
<svg class="a" style="left:974px;top:191px" width="22" height="24" viewBox="0 0 22 24" ><path d="M11.00 5.00 L17.05 8.60 L11.00 12.20 L4.95 8.60Z M4.95 8.60 L11.00 12.20 L11.00 19.40 L4.95 15.80Z M11.00 12.20 L17.05 8.60 L17.05 15.80 L11.00 19.40Z" fill="none" stroke="#f5b59a" stroke-width="1.1"/><circle cx="11.00" cy="5.00" r="1.45" fill="#f5b59a"/><circle cx="17.05" cy="8.60" r="1.45" fill="#f5b59a"/><circle cx="17.05" cy="15.80" r="1.45" fill="#f5b59a"/><circle cx="11.00" cy="19.40" r="1.45" fill="#f5b59a"/><circle cx="4.95" cy="15.80" r="1.45" fill="#f5b59a"/><circle cx="4.95" cy="8.60" r="1.45" fill="#f5b59a"/></svg>
<svg class="a" style="left:1019px;top:190px" width="21" height="25" viewBox="0 0 21 25" ><circle cx="10.4" cy="8" r="5" fill="#3a3a3a"/><path d="M10.4 12 V22" stroke="#3a3a3a" stroke-width="1.3"/><circle cx="10.4" cy="22.4" r="1.6" fill="#3a3a3a"/></svg>
<svg class="a" style="left:1062px;top:192px" width="22" height="22" viewBox="0 0 22 22" ><rect x="4.5" y="4.6" width="12.6" height="9.2" fill="none" stroke="#111" stroke-width="1.4" stroke-dasharray="2.7 1.7"/><path d="M14 10.8 L14 19 L16 17.2 L17.4 20 L18.7 19.4 L17.3 16.6 L19.8 16.4 Z" fill="#111"/></svg>
<svg class="a" style="left:1103.3px;top:191px" width="22" height="24" viewBox="0 0 22 24" ><path d="M11.00 6.00 L16.21 9.10 L11.00 12.20 L5.79 9.10Z M5.79 9.10 L11.00 12.20 L11.00 18.40 L5.79 15.30Z M11.00 12.20 L16.21 9.10 L16.21 15.30 L11.00 18.40Z" fill="none" stroke="#c4c4c4" stroke-width=".8"/><path d="M8.4 7.5 L13.6 10.6 M13.6 7.5 L8.4 10.6 M5.8 12.2 L11.0 15.3 M8.4 10.6 L8.4 16.8 M11.0 15.3 L16.2 12.2 M13.6 10.6 L13.6 16.8" stroke="#c9c9c9" stroke-width=".7" fill="none"/><circle cx="11.00" cy="6.00" r="1.45" fill="#cfcfcf"/><circle cx="16.21" cy="9.10" r="1.45" fill="#cfcfcf"/><circle cx="16.21" cy="15.30" r="1.45" fill="#cfcfcf"/><circle cx="11.00" cy="18.40" r="1.45" fill="#cfcfcf"/><circle cx="5.79" cy="15.30" r="1.45" fill="#cfcfcf"/><circle cx="5.79" cy="9.10" r="1.45" fill="#cfcfcf"/><circle cx="11.00" cy="12.20" r="1.45" fill="#cfcfcf"/></svg>
<svg class="a" style="left:1146px;top:192px" width="23" height="21" viewBox="0 0 23 21" ><path d="M8.4 11.2 C8.2 6 10.8 3 15.4 2.8 L19.2 4.6 V11.4 L12.6 15 L8.4 13.4 Z" fill="#f0f0f0" stroke="#6e6e6e" stroke-width=".9" stroke-linejoin="round"/><path d="M12.6 15 V10 C12.6 6.8 14 5 15.8 4.7 L19.2 4.6 M15.4 2.8 C13.4 3.4 12 5 11.6 7" fill="none" stroke="#6e6e6e" stroke-width=".9" stroke-linejoin="round"/><path d="M8.4 13.4 L2.8 16.8 L6.6 18.4 L12.6 15 Z" fill="#8c8c8c" stroke="#6e6e6e" stroke-width=".8" stroke-linejoin="round"/><path d="M9.2 11.8 L12 12.9" stroke="#6e6e6e" stroke-width=".8"/></svg>
<div class="a" style="left:1532px;top:619px;width:48px;height:48px;border-radius:24px;background:#0077aa;box-shadow:0 2px 10px rgba(0,0,0,.18)"></div>
<svg class="a" style="left:1545px;top:631px" width="23" height="25" viewBox="0 0 23 25" ><path d="M3.4 1.6 H18.4 a2.4 2.4 0 0 1 2.4 2.4 V22.6 L15.6 18.8 H3.4 a2.4 2.4 0 0 1 -2.4 -2.4 V4 a2.4 2.4 0 0 1 2.4 -2.4Z" fill="#fff"/><path d="M5.4 12.6 Q11 16.4 16.6 12.6" fill="none" stroke="#0077aa" stroke-width="1.3" stroke-linecap="round"/></svg>
<svg class="a" style="left:1400px;top:660px" width="200" height="190" viewBox="1400 660 200 190"><path d="M1457.7 722 L1510.4 712.7 L1537 722 L1483.8 732Z" fill="#f1f1f1" stroke="#9a9a9a" stroke-width="1"/><path d="M1457.7 722 L1483.8 732 L1488 789.7 L1457.7 784.4Z" fill="#ededed" stroke="#9a9a9a" stroke-width="1"/><path d="M1483.8 732 L1537 722 L1542.5 780 L1488 789.7Z" fill="#f7f7f7" stroke="#9a9a9a" stroke-width="1"/><path d="M1510.4 712.7 L1514.5 772 M1457.7 784.4 L1514.5 772 L1542.5 780" fill="none" stroke="#c6c6c6" stroke-width=".9" stroke-dasharray="3 2.4"/><path d="M1457.7 784.4 L1540 770.6" stroke="#f9b4b4" stroke-width="1.2"/><path d="M1541.5 770.3 L1533.6 769.5 L1534.3 773.6Z" fill="#f9a5a5"/><path d="M1457.7 784.4 L1450.5 701" stroke="#2be36a" stroke-width="1.3"/><path d="M1450.1 695.5 L1448.2 703.4 L1452.6 703Z" fill="#2be36a"/><path d="M1457.7 784.4 L1493 797" stroke="#4a4af0" stroke-width="1.3"/><path d="M1497.5 798.6 L1491 793.6 L1489.6 797.8Z" fill="#4a4af0"/><path d="M1497.5 679.5 L1502 675 L1506.5 679.5" fill="none" stroke="#555" stroke-width="1.1"/><path d="M1497.5 824.8 L1502 829.3 L1506.5 824.8" fill="none" stroke="#555" stroke-width="1.1"/><path d="M1428.8 747.5 L1424.3 752 L1428.8 756.5" fill="none" stroke="#555" stroke-width="1.1"/><path d="M1574.8 747.5 L1579.3 752 L1574.8 756.5" fill="none" stroke="#555" stroke-width="1.1"/><path d="M1545.4 703.4 L1551 698.2 L1556.6 703.4 M1546.8 702.4 V708.4 H1549.6 V704.8 H1552.4 V708.4 H1555.2 V702.4" fill="none" stroke="#555" stroke-width="1"/><path d="M1445.2 800.2 A5.6 5.6 0 1 1 1447.6 809.2" fill="none" stroke="#666" stroke-width="1"/><path d="M1442.6 799.4 L1447 799 L1445.6 803.2Z" fill="#555"/><path d="M1556.6 800.2 A5.6 5.6 0 1 0 1554.2 809.2" fill="none" stroke="#666" stroke-width="1"/><path d="M1559.2 799.4 L1554.8 799 L1556.2 803.2Z" fill="#555"/></svg>
<span class="t" style="left:1445.77px;top:670.6px;font-size:15px;line-height:20px;color:#22dd55;transform:scaleX(1.1333);">y</span>
<span class="t" style="left:1546.75px;top:756px;font-size:15.5px;line-height:20px;color:#f03a3a;transform:scaleX(1.2065);">x</span>
<span class="t" style="left:1498.55px;top:789.4px;font-size:15.5px;line-height:20px;color:#4646f0;transform:scaleX(1.1290);">z</span>
<span class="t" style="left:1504.09px;top:750.3px;font-size:9.2px;line-height:12px;color:#999;transform:scaleX(0.8793);transform-origin:50% 50%;rotate:-9deg;">TOP</span>
<span class="t" style="left:1465.25px;top:752px;font-size:6.3px;line-height:8px;color:#aaa;transform:scaleX(0.6657);transform-origin:50% 50%;rotate:12deg;">FRONT</span>
<div class="a" style="left:0;top:851.5px;width:1600px;height:1.5px;background:#9fb1c2"></div>
<!-- page_ui -->
<div class="a" style="left:0;top:121px;width:1600px;height:49px;background:#fff"></div>
<div class="a" style="left:0;top:170px;width:1600px;height:1px;background:#dedede"></div>
<div class="a" style="left:0;top:171px;width:1600px;height:4px;background:linear-gradient(#ececec,#f5f5f5)"></div>
<svg class="a" style="left:10px;top:130px" width="32" height="32" viewBox="0 0 32 32" ><defs><clipPath id="lg132"><path d="M4.5 0 H31.5 a0.5 0.5 0 0 1 0.5 0.5 V27.5 a4.5 4.5 0 0 1 -4.5 4.5 H0.5 a0.5 0.5 0 0 1 -0.5 -0.5 V4.5 a4.5 4.5 0 0 1 4.5 -4.5Z"/></clipPath></defs><g clip-path="url(#lg132)"><rect width="32" height="32" fill="#3b3735"/><path d="M-0.5 21.3 C 8 19.2, 19.2 13.2, 24.8 -0.5 L32.5 -0.5 L32.5 7.5 C 26 15.2, 14 23.2, -0.5 26.1 Z" fill="#0077aa"/><path d="M-0.5 21 C 8 18.9, 19 12.9, 24.5 -0.5" fill="none" stroke="#fff" stroke-width="1.1"/><path d="M-0.5 26.4 C 14 23.5, 26 15.6, 32.5 7.9" fill="none" stroke="#fff" stroke-width="1.1"/><path d="M4 32 C 16 29.2, 26 24.6, 32.5 18.9" fill="none" stroke="#fff" stroke-width="1.2"/></g></svg>
<span class="t" style="left:51.6px;top:135.8px;font-size:16.4px;line-height:21px;color:#0f78a8;font-weight:700;transform:scaleX(0.9112);letter-spacing:-.2px;">Connecting rod stress analysis</span>
<div class="a" style="left:290px;top:134px;width:69px;height:23px;background:#a0a0a0;border-radius:3px"></div>
<svg class="a" style="left:297px;top:140px" width="9" height="11" viewBox="0 0 9 11" ><path d="M2.4 5 V3.4 a2.1 2.1 0 0 1 4.2 0 V5" fill="none" stroke="#fff" stroke-width="1.3"/><rect x="0.8" y="4.8" width="7.4" height="5.4" rx="1" fill="#fff"/></svg>
<span class="t" style="left:309.87px;top:138.1px;font-size:11.4px;line-height:15px;color:#fff;font-weight:700;transform:scaleX(0.8795);">PRIVATE</span>
<svg class="a" style="left:375px;top:140px" width="13" height="13" viewBox="0 0 13 13" ><circle cx="2.8" cy="6.5" r="1.9" fill="none" stroke="#3d3d3d" stroke-width=".95"/><circle cx="10" cy="2.6" r="1.9" fill="none" stroke="#3d3d3d" stroke-width=".95"/><circle cx="10" cy="10.4" r="1.9" fill="none" stroke="#3d3d3d" stroke-width=".95"/><path d="M4.5 5.6 L8.3 3.5 M4.5 7.4 L8.3 9.5" stroke="#3d3d3d" stroke-width=".95"/></svg>
<svg class="a" style="left:401px;top:140px" width="13" height="13" viewBox="0 0 13 13" ><rect x="3.3" y="0.8" width="8.6" height="9.4" rx="1.3" fill="#fff" stroke="#3d3d3d" stroke-width=".95"/><path d="M3.2 3 H2 a1 1 0 0 0 -1 1 V11.2 a1 1 0 0 0 1 1 H8.8 a1 1 0 0 0 1 -1 V10.4" fill="none" stroke="#3d3d3d" stroke-width=".95"/></svg>
<svg class="a" style="left:427px;top:140px" width="13" height="13" viewBox="0 0 13 13" ><path d="M1.2 11.8 L1.9 8.6 L9 1.5 a1.1 1.1 0 0 1 1.6 0 L11.5 2.4 a1.1 1.1 0 0 1 0 1.6 L4.4 11.1 Z M7.9 2.7 L10.3 5.1" fill="none" stroke="#3d3d3d" stroke-width=".95" stroke-linejoin="round"/></svg>
<span class="t" style="left:1173.03px;top:137.2px;font-size:14px;line-height:18px;color:#2f3437;transform:scaleX(0.9226);">Dashboard</span>
<span class="t" style="left:1256.03px;top:137.2px;font-size:14px;line-height:18px;color:#2f3437;transform:scaleX(0.9245);">Public Projects</span>
<span class="t" style="left:1360.83px;top:137.2px;font-size:14px;line-height:18px;color:#2f3437;transform:scaleX(0.9344);">Forum</span>
<span class="t" style="left:1417.73px;top:137.2px;font-size:14px;line-height:18px;color:#2f3437;transform:scaleX(0.9550);">Help</span>
<svg class="a" style="left:1447px;top:139.3px" width="16" height="16" viewBox="0 0 16 16" ><path d="M4.8 6.4 L8 9.6 L11.2 6.4" fill="none" stroke="#222" stroke-width="1.6" stroke-linecap="round" stroke-linejoin="round"/></svg>
<span class="t" style="left:1471.93px;top:136.4px;font-size:14px;line-height:18px;color:#2f3437;transform:scaleX(0.8831);">JakaSpeh</span>
<svg class="a" style="left:1534.7px;top:131px" width="30" height="30" viewBox="0 0 30 30" ><defs><clipPath id="av"><circle cx="15" cy="15" r="15"/></clipPath><linearGradient id="avb" x1="0" y1="0" x2="1" y2="0.2"><stop offset="0" stop-color="#c9c1bc"/><stop offset="0.5" stop-color="#d9d3ce"/><stop offset="1" stop-color="#cbbfb6"/></linearGradient></defs><g clip-path="url(#av)"><rect width="30" height="30" fill="url(#avb)"/><path d="M2.6 31 C3.2 24 7 21.6 12 20 L15.6 24 L19.2 19.8 C24 21.4 27 24 27.6 31Z" fill="#1d1c1c"/><path d="M12.2 18.6 h6.8 v2.6 l-3.4 3.6 l-3.4 -3.6Z" fill="#c58f73"/><ellipse cx="15.7" cy="13.8" rx="4.7" ry="6.2" fill="#dcae95"/><path d="M10.9 13 C10.2 7 13 5.2 16 5.4 C19.4 5.6 21 8.2 20.4 12.6 C19.8 10.2 18.6 9 15.6 9.2 C13 9.4 11.6 10.4 10.9 13Z" fill="#3a2c26"/><path d="M11.8 13 h3.2 m1.6 0 h3.2" stroke="#6b5146" stroke-width=".8"/><path d="M13.8 17.2 Q15.7 18.5 17.6 17.1" stroke="#a8604e" stroke-width=".9" fill="none"/></g></svg>
<svg class="a" style="left:1567.3px;top:138.3px" width="16" height="16" viewBox="0 0 16 16" ><path d="M3 5.5 L8 10.5 L13 5.5" fill="none" stroke="#777" stroke-width="1.1" stroke-linecap="round" stroke-linejoin="round"/></svg>
<div class="p" style="left:9px;top:180px;width:245px;height:601px"></div>
<svg class="a" style="left:18.8px;top:190px" width="16" height="16" viewBox="0 0 16 16" ><path d="M3 5.5 L8 10.5 L13 5.5" fill="none" stroke="#555" stroke-width="1.2" stroke-linecap="round" stroke-linejoin="round"/></svg>
<svg class="a" style="left:43.5px;top:190px" width="15" height="15" viewBox="0 0 15 15" ><path d="M7.5 0.4 l3.42 1.8 l-3.42 1.8 l-3.42 -1.8 Z" fill="#d8d8d8"/><path d="M4.08 2.2 l3.42 1.8 v3.6 l-3.42 -1.8 Z" fill="#bdbdbd"/><path d="M10.92 2.2 l-3.42 1.8 v3.6 l3.42 -1.8 Z" fill="#9a9a9a"/><path d="M3.9 6.4 l3.42 1.8 l-3.42 1.8 l-3.42 -1.8 Z" fill="#d8d8d8"/><path d="M0.48 8.2 l3.42 1.8 v3.6 l-3.42 -1.8 Z" fill="#bdbdbd"/><path d="M7.32 8.2 l-3.42 1.8 v3.6 l3.42 -1.8 Z" fill="#9a9a9a"/><path d="M11.1 6.4 l3.42 1.8 l-3.42 1.8 l-3.42 -1.8 Z" fill="#d8d8d8"/><path d="M7.68 8.2 l3.42 1.8 v3.6 l-3.42 -1.8 Z" fill="#bdbdbd"/><path d="M14.52 8.2 l-3.42 1.8 v3.6 l3.42 -1.8 Z" fill="#9a9a9a"/></svg>
<span class="t" style="left:64.73px;top:188.6px;font-size:14px;line-height:18px;color:#2e2e2e;-webkit-text-stroke:0.18px #2e2e2e;transform:scaleX(0.8794);">GEOMETRIES</span>
<svg class="a" style="left:225.3px;top:190.3px" width="16" height="16" viewBox="0 0 16 16" ><circle cx="8" cy="8" r="7" fill="#fff" stroke="#cdd8e0" stroke-width="1"/><path d="M8 5.4 V10.6 M5.4 8 H10.6" stroke="#3d5668" stroke-width="1"/></svg>
<div class="a" style="left:27px;top:212px;width:1px;height:18px;background:#dcdcdc"></div>
<div class="a" style="left:27px;top:229.5px;width:5px;height:1px;background:#dcdcdc"></div>
<svg class="a" style="left:44.5px;top:222.5px" width="14" height="14" viewBox="0 0 14 14" ><path d="M6.2 1.4 L10.8 0.6 L12.6 1.8 L12.6 8.6 L7.2 12.8 L1.8 11 L1.8 6.6 L6.2 5.2Z" fill="#c9c9c9"/><path d="M6.2 1.4 L8 2.6 L8 7 L6.2 5.2Z" fill="#8a8a8a"/><path d="M8 2.6 L12.6 1.8 L12.6 8.6 L7.2 12.8 L7.2 8.2 L8 7Z" fill="#a3a3a3"/><path d="M1.8 6.6 L6.2 5.2 L8 7 L7.2 8.2 L3.4 8.4Z" fill="#dcdcdc"/><path d="M1.8 6.6 L3.4 8.4 L7.2 8.2 L7.2 12.8 L1.8 11Z" fill="#c9c9c9"/></svg>
<span class="t" style="left:64.73px;top:220.4px;font-size:14px;line-height:18px;color:#484848;transform:scaleX(0.9123);">Connecting Rod</span>
<div class="a" style="left:10px;top:252px;width:243px;height:1px;background:#e3e3e3"></div>
<svg class="a" style="left:18.8px;top:262.2px" width="16" height="16" viewBox="0 0 16 16" ><path d="M5.5 3 L10.5 8 L5.5 13" fill="none" stroke="#555" stroke-width="1.2" stroke-linecap="round" stroke-linejoin="round"/></svg>
<svg class="a" style="left:43.5px;top:262.5px" width="15" height="15" viewBox="0 0 15 15" ><path d="M7.5 0.7 l2.88 1.6 v3.2 l-2.88 1.6 l-2.88 -1.6 v-3.2 Z M4.62 2.3 l2.88 1.6 l2.88 -1.6 M7.5 3.9 v3.2" fill="none" stroke="#2f2f2f" stroke-width="1.05" stroke-linejoin="round"/><path d="M4.1 7.1 l2.88 1.6 v3.2 l-2.88 1.6 l-2.88 -1.6 v-3.2 Z M1.22 8.7 l2.88 1.6 l2.88 -1.6 M4.1 10.3 v3.2" fill="none" stroke="#2f2f2f" stroke-width="1.05" stroke-linejoin="round"/><path d="M10.9 7.1 l2.88 1.6 v3.2 l-2.88 1.6 l-2.88 -1.6 v-3.2 Z M8.02 8.7 l2.88 1.6 l2.88 -1.6 M10.9 10.3 v3.2" fill="none" stroke="#2f2f2f" stroke-width="1.05" stroke-linejoin="round"/></svg>
<span class="t" style="left:64.73px;top:261px;font-size:14px;line-height:18px;color:#2e2e2e;-webkit-text-stroke:0.18px #2e2e2e;transform:scaleX(0.8661);">MESHES (1)</span>
<svg class="a" style="left:225.3px;top:262.3px" width="16" height="16" viewBox="0 0 16 16" ><circle cx="8" cy="8" r="7" fill="#fff" stroke="#cdd8e0" stroke-width="1"/><path d="M8 5.4 V10.6 M5.4 8 H10.6" stroke="#3d5668" stroke-width="1"/></svg>
<div class="a" style="left:10px;top:288px;width:243px;height:1px;background:#e3e3e3"></div>
<svg class="a" style="left:18.8px;top:298.2px" width="16" height="16" viewBox="0 0 16 16" ><path d="M3 5.5 L8 10.5 L13 5.5" fill="none" stroke="#555" stroke-width="1.2" stroke-linecap="round" stroke-linejoin="round"/></svg>
<svg class="a" style="left:43.5px;top:298px" width="15" height="15" viewBox="0 0 15 15" ><path d="M7.5 0.4 l3.42 1.8 l-3.42 1.8 l-3.42 -1.8 Z" fill="#f6e04a"/><path d="M4.08 2.2 l3.42 1.8 v3.6 l-3.42 -1.8 Z" fill="#e8c21c"/><path d="M10.92 2.2 l-3.42 1.8 v3.6 l3.42 -1.8 Z" fill="#c9a10f"/><path d="M3.9 6.4 l3.42 1.8 l-3.42 1.8 l-3.42 -1.8 Z" fill="#3a9bd8"/><path d="M0.48 8.2 l3.42 1.8 v3.6 l-3.42 -1.8 Z" fill="#1b75b8"/><path d="M7.32 8.2 l-3.42 1.8 v3.6 l3.42 -1.8 Z" fill="#0d5a96"/><path d="M11.1 6.4 l3.42 1.8 l-3.42 1.8 l-3.42 -1.8 Z" fill="#8ed04a"/><path d="M7.68 8.2 l3.42 1.8 v3.6 l-3.42 -1.8 Z" fill="#5bab2c"/><path d="M14.52 8.2 l-3.42 1.8 v3.6 l3.42 -1.8 Z" fill="#3f8a1b"/></svg>
<span class="t" style="left:64.73px;top:296.8px;font-size:14px;line-height:18px;color:#2e2e2e;-webkit-text-stroke:0.18px #2e2e2e;transform:scaleX(0.9310);">SIMULATIONS</span>
<svg class="a" style="left:225.3px;top:298.3px" width="16" height="16" viewBox="0 0 16 16" ><circle cx="8" cy="8" r="7" fill="#fff" stroke="#cdd8e0" stroke-width="1"/><path d="M8 5.4 V10.6 M5.4 8 H10.6" stroke="#3d5668" stroke-width="1"/></svg>
<div class="a" style="left:27px;top:325px;width:1px;height:8px;background:#dcdcdc"></div>
<svg class="a" style="left:22px;top:332.5px" width="11" height="11" viewBox="0 0 11 11" ><rect x="0.5" y="0.5" width="10" height="10" fill="#fff" stroke="#d9d9d9"/><path d="M3 5.5 H8" stroke="#444" stroke-width="1"/></svg>
<svg class="a" style="left:43px;top:331px" width="16" height="14" viewBox="0 0 16 14" ><path d="M0.8 7 H5.6 M3.9 5.2 L5.7 7 L3.9 8.8" fill="none" stroke="#8e8e8e" stroke-width="1.1"/><rect x="8.7" y="1.5" width="6" height="11" rx="0.8" fill="none" stroke="#7d7d7d" stroke-width="1.3"/></svg>
<span class="t" style="left:64.73px;top:328.4px;font-size:14px;line-height:18px;color:#484848;transform:scaleX(0.9539);">Static</span>
<div class="a" style="left:10px;top:352px;width:243px;height:28px;background:#deeff6;box-shadow:inset 0 1px 0 #b5dbe9, inset 0 -1px 0 #b5dbe9"></div>
<div class="a" style="left:51px;top:352px;width:1px;height:405.5px;background:#dcdcdc"></div>
<div class="a" style="left:51.5px;top:365.5px;width:4.5px;height:1px;background:#dcdcdc"></div>
<svg class="a" style="left:69px;top:357.5px" width="14" height="14" viewBox="0 0 14 14" ><path d="M6.2 1.4 L10.8 0.6 L12.6 1.8 L12.6 8.6 L7.2 12.8 L1.8 11 L1.8 6.6 L6.2 5.2Z" fill="#c9c9c9"/><path d="M6.2 1.4 L8 2.6 L8 7 L6.2 5.2Z" fill="#8a8a8a"/><path d="M8 2.6 L12.6 1.8 L12.6 8.6 L7.2 12.8 L7.2 8.2 L8 7Z" fill="#a3a3a3"/><path d="M1.8 6.6 L6.2 5.2 L8 7 L7.2 8.2 L3.4 8.4Z" fill="#dcdcdc"/><path d="M1.8 6.6 L3.4 8.4 L7.2 8.2 L7.2 12.8 L1.8 11Z" fill="#c9c9c9"/></svg>
<svg class="a" style="left:77.4px;top:367.6px" width="10.2" height="10.2" viewBox="0 0 10.2 10.2" ><circle cx="5.1" cy="5.1" r="4.6" fill="#0f8a4b"/><path d="M3.03 5.33 l1.472 1.564 l2.76 -2.852" fill="none" stroke="#fff" stroke-width="1.38" stroke-linecap="round" stroke-linejoin="round"/></svg>
<span class="t" style="left:88.53px;top:356.8px;font-size:14px;line-height:18px;color:#484848;transform:scaleX(0.9582);">Geometry</span>
<div class="a" style="left:51.5px;top:393.5px;width:4.5px;height:1px;background:#dcdcdc"></div>
<svg class="a" style="left:68.6px;top:387.6px" width="12.8" height="12.8" viewBox="0 0 12.8 12.8" ><circle cx="6.4" cy="6.4" r="5.9" fill="#0f8a4b"/><path d="M3.745 6.695 l1.888 2.006 l3.54 -3.658" fill="none" stroke="#fff" stroke-width="1.77" stroke-linecap="round" stroke-linejoin="round"/></svg>
<span class="t" style="left:88.53px;top:384.8px;font-size:14px;line-height:18px;color:#484848;transform:scaleX(0.9167);">Contacts (0)</span>
<svg class="a" style="left:225.3px;top:386.2px" width="16" height="16" viewBox="0 0 16 16" ><circle cx="8" cy="8" r="7" fill="#fff" stroke="#cdd8e0" stroke-width="1"/><path d="M8 5.4 V10.6 M5.4 8 H10.6" stroke="#3d5668" stroke-width="1"/></svg>
<div class="a" style="left:51.5px;top:421.5px;width:4.5px;height:1px;background:#dcdcdc"></div>
<svg class="a" style="left:68.6px;top:415.6px" width="12.8" height="12.8" viewBox="0 0 12.8 12.8" ><circle cx="6.4" cy="6.4" r="5.9" fill="#0f8a4b"/><path d="M3.745 6.695 l1.888 2.006 l3.54 -3.658" fill="none" stroke="#fff" stroke-width="1.77" stroke-linecap="round" stroke-linejoin="round"/></svg>
<span class="t" style="left:88.53px;top:412.8px;font-size:14px;line-height:18px;color:#484848;transform:scaleX(0.9191);">Connectors (0)</span>
<svg class="a" style="left:225.3px;top:414.2px" width="16" height="16" viewBox="0 0 16 16" ><circle cx="8" cy="8" r="7" fill="#fff" stroke="#cdd8e0" stroke-width="1"/><path d="M8 5.4 V10.6 M5.4 8 H10.6" stroke="#3d5668" stroke-width="1"/></svg>
<svg class="a" style="left:46.5px;top:444.5px" width="11" height="11" viewBox="0 0 11 11" ><rect x="0.5" y="0.5" width="10" height="10" fill="#fff" stroke="#d9d9d9"/><path d="M3 5.5 H8" stroke="#444" stroke-width="1"/><path d="M5.5 3 V8" stroke="#444" stroke-width="1"/></svg>
<svg class="a" style="left:68.6px;top:443.6px" width="12.8" height="12.8" viewBox="0 0 12.8 12.8" ><circle cx="6.4" cy="6.4" r="5.9" fill="#0f8a4b"/><path d="M3.745 6.695 l1.888 2.006 l3.54 -3.658" fill="none" stroke="#fff" stroke-width="1.77" stroke-linecap="round" stroke-linejoin="round"/></svg>
<span class="t" style="left:88.53px;top:440.8px;font-size:14px;line-height:18px;color:#484848;transform:scaleX(0.9263);">Element technology</span>
<div class="a" style="left:51.5px;top:477.5px;width:4.5px;height:1px;background:#dcdcdc"></div>
<svg class="a" style="left:68.6px;top:471.6px" width="12.8" height="12.8" viewBox="0 0 12.8 12.8" ><circle cx="6.4" cy="6.4" r="5.9" fill="#0f8a4b"/><path d="M3.745 6.695 l1.888 2.006 l3.54 -3.658" fill="none" stroke="#fff" stroke-width="1.77" stroke-linecap="round" stroke-linejoin="round"/></svg>
<span class="t" style="left:88.53px;top:468.8px;font-size:14px;line-height:18px;color:#484848;transform:scaleX(0.9727);">Model</span>
<div class="a" style="left:51.5px;top:645.5px;width:4.5px;height:1px;background:#dcdcdc"></div>
<svg class="a" style="left:68.6px;top:639.6px" width="12.8" height="12.8" viewBox="0 0 12.8 12.8" ><circle cx="6.4" cy="6.4" r="5.9" fill="#0f8a4b"/><path d="M3.745 6.695 l1.888 2.006 l3.54 -3.658" fill="none" stroke="#fff" stroke-width="1.77" stroke-linecap="round" stroke-linejoin="round"/></svg>
<span class="t" style="left:88.53px;top:636.8px;font-size:14px;line-height:18px;color:#484848;transform:scaleX(0.9455);">Numerics</span>
<div class="a" style="left:51.5px;top:673.5px;width:4.5px;height:1px;background:#dcdcdc"></div>
<svg class="a" style="left:68.6px;top:667.6px" width="12.8" height="12.8" viewBox="0 0 12.8 12.8" ><circle cx="6.4" cy="6.4" r="5.9" fill="#0f8a4b"/><path d="M3.745 6.695 l1.888 2.006 l3.54 -3.658" fill="none" stroke="#fff" stroke-width="1.77" stroke-linecap="round" stroke-linejoin="round"/></svg>
<span class="t" style="left:88.53px;top:664.8px;font-size:14px;line-height:18px;color:#484848;transform:scaleX(0.9427);">Simulation control</span>
<svg class="a" style="left:46.5px;top:500.5px" width="11" height="11" viewBox="0 0 11 11" ><rect x="0.5" y="0.5" width="10" height="10" fill="#fff" stroke="#d9d9d9"/><path d="M3 5.5 H8" stroke="#444" stroke-width="1"/></svg>
<span class="t" style="left:64.73px;top:496.8px;font-size:14px;line-height:18px;color:#484848;transform:scaleX(0.9719);">Materials</span>
<svg class="a" style="left:225.3px;top:498.2px" width="16" height="16" viewBox="0 0 16 16" ><circle cx="8" cy="8" r="7" fill="#fff" stroke="#cdd8e0" stroke-width="1"/><path d="M8 5.4 V10.6 M5.4 8 H10.6" stroke="#3d5668" stroke-width="1"/></svg>
<svg class="a" style="left:46.5px;top:556.5px" width="11" height="11" viewBox="0 0 11 11" ><rect x="0.5" y="0.5" width="10" height="10" fill="#fff" stroke="#d9d9d9"/><path d="M3 5.5 H8" stroke="#444" stroke-width="1"/></svg>
<span class="t" style="left:64.73px;top:552.8px;font-size:14px;line-height:18px;color:#484848;transform:scaleX(0.9332);">Boundary conditions</span>
<svg class="a" style="left:225.3px;top:554.2px" width="16" height="16" viewBox="0 0 16 16" ><circle cx="8" cy="8" r="7" fill="#fff" stroke="#cdd8e0" stroke-width="1"/><path d="M8 5.4 V10.6 M5.4 8 H10.6" stroke="#3d5668" stroke-width="1"/></svg>
<svg class="a" style="left:46.5px;top:696.5px" width="11" height="11" viewBox="0 0 11 11" ><rect x="0.5" y="0.5" width="10" height="10" fill="#fff" stroke="#d9d9d9"/><path d="M3 5.5 H8" stroke="#444" stroke-width="1"/><path d="M5.5 3 V8" stroke="#444" stroke-width="1"/></svg>
<span class="t" style="left:64.73px;top:692.8px;font-size:14px;line-height:18px;color:#484848;transform:scaleX(0.9370);">Result control</span>
<svg class="a" style="left:46.5px;top:752.5px" width="11" height="11" viewBox="0 0 11 11" ><rect x="0.5" y="0.5" width="10" height="10" fill="#fff" stroke="#d9d9d9"/><path d="M3 5.5 H8" stroke="#444" stroke-width="1"/><path d="M5.5 3 V8" stroke="#444" stroke-width="1"/></svg>
<span class="t" style="left:64.73px;top:748.8px;font-size:14px;line-height:18px;color:#484848;transform:scaleX(0.9045);">Simulation Runs</span>
<svg class="a" style="left:225.3px;top:750.2px" width="16" height="16" viewBox="0 0 16 16" ><circle cx="8" cy="8" r="7" fill="#fff" stroke="#cdd8e0" stroke-width="1"/><path d="M8 5.4 V10.6 M5.4 8 H10.6" stroke="#3d5668" stroke-width="1"/></svg>
<svg class="a" style="left:46.5px;top:724.5px" width="11" height="11" viewBox="0 0 11 11" ><rect x="0.5" y="0.5" width="10" height="10" fill="#fff" stroke="#d9d9d9"/><path d="M3 5.5 H8" stroke="#444" stroke-width="1"/><path d="M5.5 3 V8" stroke="#444" stroke-width="1"/></svg>
<svg class="a" style="left:69px;top:721px" width="14" height="14" viewBox="0 0 15 15" ><path d="M7.5 0.7 l2.88 1.6 v3.2 l-2.88 1.6 l-2.88 -1.6 v-3.2 Z M4.62 2.3 l2.88 1.6 l2.88 -1.6 M7.5 3.9 v3.2" fill="none" stroke="#1d5a2a" stroke-width="1.05" stroke-linejoin="round"/><path d="M4.1 7.1 l2.88 1.6 v3.2 l-2.88 1.6 l-2.88 -1.6 v-3.2 Z M1.22 8.7 l2.88 1.6 l2.88 -1.6 M4.1 10.3 v3.2" fill="none" stroke="#1d5a2a" stroke-width="1.05" stroke-linejoin="round"/><path d="M10.9 7.1 l2.88 1.6 v3.2 l-2.88 1.6 l-2.88 -1.6 v-3.2 Z M8.02 8.7 l2.88 1.6 l2.88 -1.6 M10.9 10.3 v3.2" fill="none" stroke="#1d5a2a" stroke-width="1.05" stroke-linejoin="round"/></svg>
<svg class="a" style="left:77.4px;top:731.4px" width="10.2" height="10.2" viewBox="0 0 10.2 10.2" ><circle cx="5.1" cy="5.1" r="4.6" fill="#0f8a4b"/><path d="M3.03 5.33 l1.472 1.564 l2.76 -2.852" fill="none" stroke="#fff" stroke-width="1.38" stroke-linecap="round" stroke-linejoin="round"/></svg>
<span class="t" style="left:88.53px;top:720.2px;font-size:14px;line-height:18px;color:#484848;transform:scaleX(0.9377);">Mesh</span>
<div class="a" style="left:75px;top:533.5px;width:5.5px;height:1px;background:#dcdcdc"></div>
<svg class="a" style="left:92.6px;top:527.6px" width="12.8" height="12.8" viewBox="0 0 12.8 12.8" ><circle cx="6.4" cy="6.4" r="5.9" fill="#0f8a4b"/><path d="M3.745 6.695 l1.888 2.006 l3.54 -3.658" fill="none" stroke="#fff" stroke-width="1.77" stroke-linecap="round" stroke-linejoin="round"/></svg>
<span class="t" style="left:112.53px;top:524.8px;font-size:14px;line-height:18px;color:#484848;transform:scaleX(0.9210);">Steel</span>
<div class="a" style="left:75px;top:589.5px;width:5.5px;height:1px;background:#dcdcdc"></div>
<svg class="a" style="left:92.6px;top:583.6px" width="12.8" height="12.8" viewBox="0 0 12.8 12.8" ><circle cx="6.4" cy="6.4" r="5.9" fill="#0f8a4b"/><path d="M3.745 6.695 l1.888 2.006 l3.54 -3.658" fill="none" stroke="#fff" stroke-width="1.77" stroke-linecap="round" stroke-linejoin="round"/></svg>
<span class="t" style="left:112.53px;top:580.8px;font-size:14px;line-height:18px;color:#484848;transform:scaleX(0.9025);">Pressure 1</span>
<div class="a" style="left:75px;top:617.5px;width:5.5px;height:1px;background:#dcdcdc"></div>
<svg class="a" style="left:92.6px;top:611.6px" width="12.8" height="12.8" viewBox="0 0 12.8 12.8" ><circle cx="6.4" cy="6.4" r="5.9" fill="#0f8a4b"/><path d="M3.745 6.695 l1.888 2.006 l3.54 -3.658" fill="none" stroke="#fff" stroke-width="1.77" stroke-linecap="round" stroke-linejoin="round"/></svg>
<span class="t" style="left:112.53px;top:608.8px;font-size:14px;line-height:18px;color:#484848;transform:scaleX(0.9150);">Fixed support 2</span>
<div class="a" style="left:75px;top:518.5px;width:1px;height:15px;background:#dcdcdc"></div>
<div class="a" style="left:75px;top:574.5px;width:1px;height:43px;background:#dcdcdc"></div>
<div class="p" style="left:9px;top:785.5px;width:245px;height:35.5px"></div>
<span class="t" style="left:18.62px;top:792.8px;font-size:16px;line-height:21px;color:#333;-webkit-text-stroke:0.3px #333;transform:scaleX(0.9378);">Job status</span>
<div class="a" style="left:257px;top:493px;width:1px;height:16px;background:#c9c9c9"></div>
<div class="a" style="left:259.5px;top:493px;width:1px;height:16px;background:#c9c9c9"></div>
<div class="p" style="left:262.5px;top:180px;width:349.5px;height:198.5px"></div>
<span class="t" style="left:274.42px;top:192.1px;font-size:16px;line-height:21px;color:#333;-webkit-text-stroke:0.3px #333;transform:scaleX(0.9808);">Geometry</span>
<div class="a" style="left:536px;top:186px;width:32px;height:32px;background:#0077aa;border-radius:3px"></div>
<svg class="a" style="left:545px;top:196px" width="14" height="12" viewBox="0 0 14 12" ><path d="M1.6 6.3 L5.2 9.8 L12.4 2" fill="none" stroke="#fff" stroke-width="1.8" stroke-linecap="round" stroke-linejoin="round"/></svg>
<div class="a" style="left:572.5px;top:186px;width:31px;height:32px;background:#fff;border:1px solid #dcdcdc;border-radius:3px;box-sizing:border-box"></div>
<svg class="a" style="left:583px;top:197px" width="10" height="10" viewBox="0 0 10 10" ><path d="M1 1 L9 9 M9 1 L1 9" stroke="#444" stroke-width="1.1"/></svg>
<div class="a" style="left:264px;top:224px;width:347px;height:1px;background:#e3e3e3"></div>
<span class="t" style="left:274.53px;top:238.8px;font-size:14px;line-height:18px;color:#333;-webkit-text-stroke:0.28px #333;transform:scaleX(0.9300);">Select a simulation domain</span>
<div class="a" style="left:264px;top:265px;width:347px;height:55.5px;background:#e5eff7"></div>
<svg class="a" style="left:277.5px;top:281px" width="12" height="12" viewBox="0 0 14 14" ><path d="M6.2 1.4 L10.8 0.6 L12.6 1.8 L12.6 8.6 L7.2 12.8 L1.8 11 L1.8 6.6 L6.2 5.2Z" fill="#c9c9c9"/><path d="M6.2 1.4 L8 2.6 L8 7 L6.2 5.2Z" fill="#8a8a8a"/><path d="M8 2.6 L12.6 1.8 L12.6 8.6 L7.2 12.8 L7.2 8.2 L8 7Z" fill="#a3a3a3"/><path d="M1.8 6.6 L6.2 5.2 L8 7 L7.2 8.2 L3.4 8.4Z" fill="#dcdcdc"/><path d="M1.8 6.6 L3.4 8.4 L7.2 8.2 L7.2 12.8 L1.8 11Z" fill="#c9c9c9"/></svg>
<span class="t" style="left:297.23px;top:277px;font-size:14px;line-height:18px;color:#484848;transform:scaleX(0.9173);">Connecting Rod</span>
<span class="t" style="left:538.14px;top:277.2px;font-size:12px;line-height:16px;color:#555;transform:scaleX(0.8938);">GEOMETRY</span>
<span class="t" style="left:274.84px;top:298.8px;font-size:12px;line-height:16px;color:#777;transform:scaleX(0.8638);">72 faces, 1 volumes, 0 nodes, 170 edges</span>
<div class="a" style="left:264px;top:329px;width:347px;height:1px;background:#e3e3e3"></div>
<div class="a" style="left:273px;top:338px;width:31.5px;height:31.5px;background:#fff;border:1px solid #dcdcdc;border-radius:3px;box-sizing:border-box"></div>
<div class="a" style="left:309px;top:338px;width:31.5px;height:31.5px;background:#fff;border:1px solid #dcdcdc;border-radius:3px;box-sizing:border-box"></div>
<svg class="a" style="left:282px;top:346.5px" width="13" height="14" viewBox="0 0 13 14" ><path d="M6.5 10 V1.6 M3.2 4.8 L6.5 1.5 L9.8 4.8 M1.6 12.5 H11.4" fill="none" stroke="#444" stroke-width="1"/></svg>
<svg class="a" style="left:318px;top:346.5px" width="13" height="14" viewBox="0 0 13 14" ><path d="M6.5 1.2 V9.6 M3.2 6.4 L6.5 9.7 L9.8 6.4 M1.6 12.5 H11.4" fill="none" stroke="#444" stroke-width="1"/></svg>
<div class="p" style="left:1356.5px;top:179.5px;width:235.5px;height:173.5px"></div>
<svg class="a" style="left:1367px;top:190px" width="16" height="16" viewBox="0 0 16 16" ><path d="M3 5.5 L8 10.5 L13 5.5" fill="none" stroke="#555" stroke-width="1.2" stroke-linecap="round" stroke-linejoin="round"/></svg>
<span class="t" style="left:1388.53px;top:188.6px;font-size:14px;line-height:18px;color:#2e2e2e;-webkit-text-stroke:0.18px #2e2e2e;transform:scaleX(0.9027);">GEOMETRY</span>
<div class="a" style="left:1375.5px;top:217px;width:1px;height:8px;background:#dcdcdc"></div>
<svg class="a" style="left:1370px;top:225px" width="11" height="11" viewBox="0 0 11 11" ><rect x="0.5" y="0.5" width="10" height="10" fill="#fff" stroke="#d9d9d9"/><path d="M3 5.5 H8" stroke="#444" stroke-width="1"/></svg>
<span class="t" style="left:1388.23px;top:220.4px;font-size:14px;line-height:18px;color:#333;-webkit-text-stroke:0.18px #333;transform:scaleX(0.9332);">Connecting Rod</span>
<div class="a" style="left:1399px;top:245px;width:1px;height:13px;background:#dcdcdc"></div>
<div class="a" style="left:1399px;top:257.5px;width:5.5px;height:1px;background:#dcdcdc"></div>
<svg class="a" style="left:1415px;top:249.5px" width="15" height="17" viewBox="0 0 15 17" ><path d="M7.5 0.8 L14.2 4.2 L7.5 7.8 L0.8 4.2Z" fill="#d4d4d4"/><path d="M0.8 4.2 L7.5 7.8 V16.2 L0.8 12.6Z" fill="#8f8f8f"/><path d="M14.2 4.2 L7.5 7.8 V16.2 L14.2 12.6Z" fill="#b1b1b1"/></svg>
<span class="t" style="left:1436.23px;top:248.3px;font-size:14px;line-height:18px;color:#555;transform:scaleX(0.9153);">Connecting Rod</span>
<div class="a" style="left:1357.5px;top:280px;width:233.5px;height:1px;background:#e3e3e3"></div>
<span class="t" style="left:1364.23px;top:288px;font-size:14px;line-height:18px;color:#9a9a9a;-webkit-text-stroke:0.28px #9a9a9a;transform:scaleX(0.8733);">SAVED SELECTIONS</span>
<div class="a" style="left:1357.5px;top:316.5px;width:233.5px;height:1px;background:#e3e3e3"></div>
<span class="t" style="left:1364.23px;top:324px;font-size:14px;line-height:18px;color:#2e2e2e;-webkit-text-stroke:0.18px #2e2e2e;transform:scaleX(0.9069);">GEOMETRY PRIMITIVES</span>
<svg class="a" style="left:1563.3px;top:326.5px" width="16" height="16" viewBox="0 0 16 16" ><circle cx="8" cy="8" r="7" fill="#fff" stroke="#cdd8e0" stroke-width="1"/><path d="M8 5.4 V10.6 M5.4 8 H10.6" stroke="#3d5668" stroke-width="1"/></svg>
<div class="a" style="left:1350px;top:257.5px;width:1px;height:16.5px;background:#c9c9c9"></div>
<div class="a" style="left:1352.5px;top:257.5px;width:1px;height:16.5px;background:#c9c9c9"></div>
<!-- chrome_ui -->
<div class="a" style="left:0;top:0;width:1600px;height:41px;background:#dde3ea"></div>
<div class="a" style="left:0;top:40px;width:1600px;height:80px;background:#fff;border-radius:9px 9px 0 0"></div>
<div class="a" style="left:0;top:120px;width:1600px;height:1px;background:#dfe1e5"></div>
<div class="a" style="left:6px;top:6px;width:28px;height:28px;background:#fff;border-radius:9px"></div>
<svg class="a" style="left:14px;top:15px" width="12" height="10" viewBox="0 0 12 10" ><path d="M2.2 3 L6 6.8 L9.8 3" fill="none" stroke="#1f1f1f" stroke-width="1.9" stroke-linecap="round" stroke-linejoin="round"/></svg>
<svg class="a" style="left:29px;top:6px" width="255" height="35" viewBox="0 0 255 35" ><path d="M0 35 H0 C 8 34.6, 12 30, 12 23 V10 A10 10 0 0 1 22 0 H233 A10 10 0 0 1 243 10 V23 C 243 30, 247 34.6, 255 35 Z" fill="#fff"/></svg>
<svg class="a" style="left:48px;top:12px" width="16" height="16" viewBox="0 0 32 32" ><defs><clipPath id="lg496"><path d="M4.5 0 H31.5 a0.5 0.5 0 0 1 0.5 0.5 V27.5 a4.5 4.5 0 0 1 -4.5 4.5 H0.5 a0.5 0.5 0 0 1 -0.5 -0.5 V4.5 a4.5 4.5 0 0 1 4.5 -4.5Z"/></clipPath></defs><g clip-path="url(#lg496)"><rect width="32" height="32" fill="#3b3735"/><path d="M-0.5 21.3 C 8 19.2, 19.2 13.2, 24.8 -0.5 L32.5 -0.5 L32.5 7.5 C 26 15.2, 14 23.2, -0.5 26.1 Z" fill="#0077aa"/><path d="M-0.5 21 C 8 18.9, 19 12.9, 24.5 -0.5" fill="none" stroke="#fff" stroke-width="1.1"/><path d="M-0.5 26.4 C 14 23.5, 26 15.6, 32.5 7.9" fill="none" stroke="#fff" stroke-width="1.1"/><path d="M4 32 C 16 29.2, 26 24.6, 32.5 18.9" fill="none" stroke="#fff" stroke-width="1.2"/></g></svg>
<span class="t" style="left:71.84px;top:12.6px;font-size:12px;line-height:16px;color:#1f1f1f;transform:scaleX(0.9784);">Connecting rod stress analysis |</span>
<div class="a" style="left:231px;top:12px;width:9px;height:18px;background:linear-gradient(90deg,rgba(255,255,255,.35),rgba(255,255,255,.75))"></div>
<svg class="a" style="left:250.5px;top:15px" width="10" height="10" viewBox="0 0 10 10" ><path d="M1.3 1.3 L8.7 8.7 M8.7 1.3 L1.3 8.7" stroke="#1f1f1f" stroke-width="1.7" stroke-linecap="round"/></svg>
<svg class="a" style="left:285.5px;top:13.5px" width="13" height="13" viewBox="0 0 13 13" ><path d="M6.5 1.6 V11.4 M1.6 6.5 H11.4" stroke="#474747" stroke-width="1.8"/></svg>
<svg class="a" style="left:1479px;top:14px" width="12" height="12" viewBox="0 0 12 12" ><path d="M0.5 6.5 H11.5" stroke="#555b63" stroke-width="1.1"/></svg>
<svg class="a" style="left:1524px;top:14px" width="13" height="13" viewBox="0 0 13 13" ><rect x="1" y="3.2" width="8.3" height="8.3" rx="2" fill="none" stroke="#555b63" stroke-width="1.1"/><path d="M3.6 3 V2.8 a1.8 1.8 0 0 1 1.8 -1.8 H10 a2 2 0 0 1 2 2 V7.6 a1.8 1.8 0 0 1 -1.8 1.8 H9.6" fill="none" stroke="#555b63" stroke-width="1.1"/></svg>
<svg class="a" style="left:1571px;top:14px" width="12" height="12" viewBox="0 0 12 12" ><path d="M0.8 0.8 L11.2 11.2 M11.2 0.8 L0.8 11.2" stroke="#555b63" stroke-width="1.1"/></svg>
<svg class="a" style="left:14px;top:55px" width="16" height="16" viewBox="0 0 16 16" ><path d="M14.2 8 H2.6 M8 2.4 L2.4 8 L8 13.6" fill="none" stroke="#444746" stroke-width="1.9" stroke-linecap="round" stroke-linejoin="round"/></svg>
<svg class="a" style="left:50px;top:55px" width="16" height="16" viewBox="0 0 16 16" ><path d="M1.8 8 H13.4 M8 2.4 L13.6 8 L8 13.6" fill="none" stroke="#b4b7bb" stroke-width="1.9" stroke-linecap="round" stroke-linejoin="round"/></svg>
<svg class="a" style="left:86px;top:55px" width="16" height="16" viewBox="0 0 16 16" ><path d="M13.3 8.6 A5.6 5.6 0 1 1 11.7 4" fill="none" stroke="#444746" stroke-width="1.9" stroke-linecap="round"/><path d="M13.6 1.6 V5.6 H9.6 Z" fill="#444746" stroke="#444746" stroke-width="1" stroke-linejoin="round"/></svg>
<div class="a" style="left:121px;top:46px;width:1196.5px;height:34px;background:#ebeff8;border-radius:17px"></div>
<div class="a" style="left:125px;top:51px;width:24px;height:24px;background:#fff;border-radius:12px"></div>
<svg class="a" style="left:129px;top:55px" width="16" height="16" viewBox="0 0 16 16" ><circle cx="4.6" cy="4.9" r="2" fill="none" stroke="#1f1f1f" stroke-width="1.7"/><path d="M8.8 4.9 H14.2" stroke="#1f1f1f" stroke-width="1.7" stroke-linecap="round"/><circle cx="11.4" cy="11.1" r="2" fill="none" stroke="#1f1f1f" stroke-width="1.7"/><path d="M1.8 11.1 H7.2" stroke="#1f1f1f" stroke-width="1.7" stroke-linecap="round"/></svg>
<span class="t" style="left:156.72px;top:54px;font-size:14.2px;line-height:18px;color:#1f1f1f;transform:scaleX(0.9693);">simscale.com/workbench/?pid=6975917152884671927&amp;mi=spec%3A6003c587-c477-4289-a657-878ee106e5e3%2Cservice%3ASIMULATION%2Cstrategy%3A19&amp;ps=domain</span>
<svg class="a" style="left:1285px;top:54px" width="18" height="18" viewBox="0 0 18 18" ><path d="M9 1.9 L11.1 6.7 L16.3 7.2 L12.4 10.7 L13.5 15.8 L9 13.1 L4.5 15.8 L5.6 10.7 L1.7 7.2 L6.9 6.7 Z" fill="none" stroke="#444746" stroke-width="1.6" stroke-linejoin="round"/></svg>
<svg class="a" style="left:1336px;top:55px" width="16" height="16" viewBox="0 0 16 16" ><rect x="0" y="0" width="16" height="16" fill="#fff"/><path d="M0 0 H7 V6 H0 Z" fill="#e8eaed"/><path d="M7 0 H16 V7 H7 Z" fill="#ea2a2a"/><path d="M6 7 H16 V16 H6 Z" fill="#1e9a48"/><path d="M1 1 C4.5 0.5 5.5 3 4 5 C6 6 5 8.5 2.5 8 C 1 7.5 1 6 2 5.5 C 0.5 4.5 0.3 2.5 1 1Z" fill="#1a73e8"/><ellipse cx="5" cy="12.8" rx="3.6" ry="2.6" fill="#fbbc05"/></svg>
<svg class="a" style="left:1372px;top:55px" width="16" height="16" viewBox="0 0 16 16" ><circle cx="8" cy="8" r="7.2" fill="#e59a45"/><circle cx="8" cy="8" r="7.2" fill="none" stroke="#c77f2e" stroke-width=".8"/><circle cx="5" cy="5.5" r="1.1" fill="#6b3b12"/><circle cx="10.3" cy="4.8" r="1" fill="#6b3b12"/><circle cx="8" cy="8.6" r="1.1" fill="#6b3b12"/><circle cx="4.6" cy="10.4" r="1" fill="#6b3b12"/><circle cx="11.2" cy="10.8" r="1.1" fill="#6b3b12"/><circle cx="12.3" cy="7.4" r=".8" fill="#6b3b12"/></svg>
<svg class="a" style="left:1407px;top:54px" width="18" height="18" viewBox="0 0 18 18" ><path d="M3 5.2 H6.6 V4.2 a1.9 1.9 0 0 1 3.8 0 V5.2 H13.2 a0.9 0.9 0 0 1 0.9 0.9 V8.6 H15 a1.9 1.9 0 0 1 0 3.8 H14.1 V15.1 a0.9 0.9 0 0 1 -0.9 0.9 H3 a0.9 0.9 0 0 1 -0.9 -0.9 V12.4 H3 a1.9 1.9 0 0 0 0 -3.8 H2.1 V6.1 a0.9 0.9 0 0 1 0.9 -0.9 Z" fill="none" stroke="#444746" stroke-width="1.7" stroke-linejoin="round"/></svg>
<div class="a" style="left:1442px;top:55px;width:2px;height:16px;background:#c2d7f7;border-radius:1px"></div>
<svg class="a" style="left:1461px;top:54px" width="18" height="18" viewBox="0 0 18 18" ><path d="M9 2 V11 M4.8 7.4 L9 11.6 L13.2 7.4" fill="none" stroke="#444746" stroke-width="1.9" stroke-linecap="round" stroke-linejoin="round"/><path d="M2.6 12 V14.3 a1.2 1.2 0 0 0 1.2 1.2 H14.2 a1.2 1.2 0 0 0 1.2 -1.2 V12" fill="none" stroke="#444746" stroke-width="1.9" stroke-linecap="round"/></svg>
<svg class="a" style="left:1498px;top:55px" width="16" height="16" viewBox="0 0 16 16" ><rect x="1.3" y="1.8" width="13.4" height="12.4" rx="1.6" fill="none" stroke="#444746" stroke-width="1.8"/><path d="M8.6 1.8 H13.4 a1.4 1.4 0 0 1 1.4 1.4 V12.8 a1.4 1.4 0 0 1 -1.4 1.4 H8.6 Z" fill="#444746"/></svg>
<div class="a" style="left:1532px;top:53px;width:20px;height:20px;background:#5b3a31;border-radius:10px"></div>
<span class="t" style="left:1538.6px;top:56.2px;font-size:11px;line-height:14px;color:#fff;transform:scaleX(1.2545);">J</span>
<svg class="a" style="left:1575px;top:54px" width="6" height="18" viewBox="0 0 6 18" ><circle cx="3" cy="3" r="1.6" fill="#444746"/><circle cx="3" cy="9" r="1.6" fill="#444746"/><circle cx="3" cy="15" r="1.6" fill="#444746"/></svg>
<svg class="a" style="left:13.6px;top:93px" width="16.4" height="14" viewBox="0 0 16.4 14" ><path d="M1.2 2.6 a1.4 1.4 0 0 1 1.4 -1.4 h3.9 l1.7 1.9 h5.3 a1.4 1.4 0 0 1 1.4 1.4 v6.9 a1.4 1.4 0 0 1 -1.4 1.4 h-10.9 a1.4 1.4 0 0 1 -1.4 -1.4 z" fill="none" stroke="#444746" stroke-width="1.7" stroke-linejoin="round"/></svg>
<span class="t" style="left:37.64px;top:91.7px;font-size:12px;line-height:16px;color:#27262b;transform:scaleX(1.0004);">plans</span>
<svg class="a" style="left:87.4px;top:93px" width="16.4" height="14" viewBox="0 0 16.4 14" ><path d="M1.2 2.6 a1.4 1.4 0 0 1 1.4 -1.4 h3.9 l1.7 1.9 h5.3 a1.4 1.4 0 0 1 1.4 1.4 v6.9 a1.4 1.4 0 0 1 -1.4 1.4 h-10.9 a1.4 1.4 0 0 1 -1.4 -1.4 z" fill="none" stroke="#444746" stroke-width="1.7" stroke-linejoin="round"/></svg>
<span class="t" style="left:111.34px;top:91.7px;font-size:12px;line-height:16px;color:#27262b;transform:scaleX(1.0740);">jira</span>
<svg class="a" style="left:150.6px;top:93px" width="16.4" height="14" viewBox="0 0 16.4 14" ><path d="M1.2 2.6 a1.4 1.4 0 0 1 1.4 -1.4 h3.9 l1.7 1.9 h5.3 a1.4 1.4 0 0 1 1.4 1.4 v6.9 a1.4 1.4 0 0 1 -1.4 1.4 h-10.9 a1.4 1.4 0 0 1 -1.4 -1.4 z" fill="none" stroke="#444746" stroke-width="1.7" stroke-linejoin="round"/></svg>
<span class="t" style="left:174.34px;top:91.7px;font-size:12px;line-height:16px;color:#27262b;transform:scaleX(1.0092);">kibana</span>
<svg class="a" style="left:231.8px;top:93px" width="16.4" height="14" viewBox="0 0 16.4 14" ><path d="M1.2 2.6 a1.4 1.4 0 0 1 1.4 -1.4 h3.9 l1.7 1.9 h5.3 a1.4 1.4 0 0 1 1.4 1.4 v6.9 a1.4 1.4 0 0 1 -1.4 1.4 h-10.9 a1.4 1.4 0 0 1 -1.4 -1.4 z" fill="none" stroke="#444746" stroke-width="1.7" stroke-linejoin="round"/></svg>
<span class="t" style="left:255.64px;top:91.7px;font-size:12px;line-height:16px;color:#27262b;transform:scaleX(1.0137);">metrics</span>
<svg class="a" style="left:314.5px;top:92px" width="16.5" height="16" viewBox="0 0 16.5 16" ><path d="M8.25 15 L1 9.2 L2.9 2.2 L5 8 H11.5 L13.6 2.2 L15.5 9.2 Z" fill="#fc6d26"/><path d="M8.25 15 L5 8 H11.5 Z" fill="#e24329"/><path d="M1 9.2 L2.9 2.2 L5 8 Z M15.5 9.2 L13.6 2.2 L11.5 8Z" fill="#e24329"/><path d="M1 9.2 L8.25 15 L5 8 Z" fill="#fca326" opacity=".85"/><path d="M15.5 9.2 L8.25 15 L11.5 8 Z" fill="#fca326" opacity=".85"/></svg>
<span class="t" style="left:336.34px;top:91.7px;font-size:12px;line-height:16px;color:#27262b;transform:scaleX(0.9898);">GitLab</span>
<svg class="a" style="left:392px;top:92px" width="16" height="16" viewBox="0 0 16 16" ><circle cx="8.6" cy="4.2" r="3.6" fill="#fec514"/><circle cx="3.6" cy="5.4" r="2.3" fill="#f04e98"/><circle cx="12.6" cy="8.6" r="2.6" fill="#1ba9f5"/><circle cx="7" cy="11.2" r="3.8" fill="#02bcb7"/><circle cx="2.8" cy="9.4" r="1.7" fill="#93c90e"/><circle cx="11.5" cy="13" r="1.7" fill="#0b64dd"/></svg>
<span class="t" style="left:413.84px;top:91.7px;font-size:12px;line-height:16px;color:#27262b;transform:scaleX(0.9686);">Kibana</span>
<svg class="a" style="left:470px;top:91.5px" width="16.5" height="17" viewBox="0 0 16.5 17" ><path d="M2 17 C2 12.5 4.5 11.5 8 11.5 C12 11.5 15 12.5 15 17Z" fill="#335061"/><path d="M7 12 L8.3 16.8 L9.8 12Z" fill="#fff"/><path d="M7.6 14.2 L9.2 14.2 L10 15.6 L8.4 16.4 L6.9 15.6Z" fill="#d33833"/><ellipse cx="8.3" cy="6.6" rx="4.9" ry="5.6" fill="#f0d6b7"/><path d="M3.3 6 C3 1.5 6 0.4 8.6 0.4 C11.5 0.4 13.6 2.4 13.3 5.6 C12 3.6 9 3 6.5 3.6 C5 4 4 5 3.3 6Z" fill="#81807f"/><circle cx="6.7" cy="6.4" r=".7" fill="#222"/><circle cx="10.3" cy="6.2" r=".7" fill="#222"/><path d="M6.5 9.4 Q8.4 10.8 10.6 9.2" stroke="#8a5a44" stroke-width=".8" fill="none"/><ellipse cx="8.3" cy="6.6" rx="4.9" ry="5.6" fill="none" stroke="#3a3a3a" stroke-width=".6"/></svg>
<span class="t" style="left:491.34px;top:91.7px;font-size:12px;line-height:16px;color:#27262b;transform:scaleX(0.9634);">Jenkins</span>
<svg class="a" style="left:550.5px;top:92px" width="16" height="16" viewBox="0 0 16 16" ><path d="M8 0.6 L15.4 8 L8 15.4 L0.6 8 Z" fill="#2684ff"/><path d="M8 5.3 L10.7 8 L8 10.7 L5.3 8 Z" fill="#fff"/><path d="M8 0.6 L0.6 8 L4 8 L8 4Z" fill="#0052cc" opacity=".55"/></svg>
<span class="t" style="left:571.84px;top:91.7px;font-size:12px;line-height:16px;color:#27262b;transform:scaleX(0.9110);">JIRA</span>
<svg class="a" style="left:616px;top:93.5px" width="16" height="13" viewBox="0 0 16 13" ><path d="M0.5 2 V11.5 a1 1 0 0 0 1 1 H3.6 V5.4 L8 8.7 L12.4 5.4 V12.5 H14.5 a1 1 0 0 0 1 -1 V2 a1.5 1.5 0 0 0 -2.4 -1.2 L8 4.6 L2.9 0.8 A1.5 1.5 0 0 0 0.5 2Z" fill="#ea4335"/><path d="M0.5 2 V11.5 a1 1 0 0 0 1 1 H3.6 V5.4 L0.5 3Z" fill="#4285f4"/><path d="M12.4 5.4 V12.5 H14.5 a1 1 0 0 0 1 -1 V3Z" fill="#34a853"/><path d="M12.4 1.3 V5.4 L15.5 3 V2 a1.5 1.5 0 0 0 -2.4 -1.2Z" fill="#fbbc04"/><path d="M3.6 1.3 V5.4 L0.5 3 V2 a1.5 1.5 0 0 1 2.4 -1.2Z" fill="#c5221f"/></svg>
<span class="t" style="left:637.34px;top:91.7px;font-size:12px;line-height:16px;color:#27262b;transform:scaleX(1.0209);">GMail</span>
<svg class="a" style="left:689px;top:92px" width="16" height="16" viewBox="0 0 16 16" ><rect x="0.5" y="0.5" width="15" height="15" rx="2" fill="#fff"/><path d="M0.5 2.5 a2 2 0 0 1 2 -2 H12 V4 H0.5Z" fill="#4285f4"/><path d="M0.5 4 H4 V12 H0.5Z" fill="#4285f4"/><path d="M12 0.5 H13.5 a2 2 0 0 1 2 2 V4 H12Z" fill="#1967d2"/><path d="M12 4 H15.5 V12 H12Z" fill="#fbbc04"/><path d="M4 12 H12 V15.5 H4Z" fill="#34a853"/><path d="M0.5 12 H4 V15.5 H2.5 a2 2 0 0 1 -2 -2Z" fill="#188038"/><path d="M12 12 H15.5 L12 15.5Z" fill="#ea4335"/></svg>
<span class="t" style="left:693px;top:95.7px;font-size:7.2px;line-height:9px;color:#1a73e8;font-weight:700;transform:scaleX(1.0150);">29</span>
<span class="t" style="left:710.54px;top:91.7px;font-size:12px;line-height:16px;color:#27262b;transform:scaleX(0.9856);">Calendar</span>
<svg class="a" style="left:778.5px;top:92px" width="15.5" height="16" viewBox="0 0 15.5 16" ><path d="M7.8 0.8 C9 1.4 9.6 2.3 9.8 3.2 C11 2.8 12.2 3 13 3.4 C12.8 4.5 13 5.4 13.6 6.4 C14.6 6.8 15 7.6 15.2 8.4 C14.2 9 13.8 9.8 13.8 10.8 C13.4 12 12.6 12.8 11.8 13.2 C10.8 13 10 13.4 9.2 14.2 C8 14.8 6.8 14.8 5.8 14.4 C5.2 13.6 4.4 13 3.4 13 C2.4 12.4 1.8 11.6 1.6 10.6 C2 9.6 1.8 8.8 1.2 8 C1 6.8 1.4 5.8 2 5 C3 4.8 3.6 4.2 4 3.2 C4.8 2.4 5.8 2 6.8 2 C7.2 1.6 7.6 1.2 7.8 0.8Z" fill="#f46800"/><path d="M7.8 0.8 C9 1.4 9.6 2.3 9.8 3.2 C11 2.8 12.2 3 13 3.4 C12.8 4.5 13 5.4 13.6 6.4 L8 8 Z" fill="#fbad37" opacity=".6"/><circle cx="8.1" cy="8.4" r="3.6" fill="#fff"/><path d="M8.3 6.2 A2.3 2.3 0 1 0 10.5 8.8 H8.6" fill="none" stroke="#f46800" stroke-width="1.5"/></svg>
<span class="t" style="left:799.34px;top:91.7px;font-size:12px;line-height:16px;color:#27262b;transform:scaleX(0.9802);">Grafana</span>
<svg class="a" style="left:862px;top:92px" width="16" height="16" viewBox="0 0 16 16" ><rect x="0.3" y="0.3" width="15.4" height="15.4" rx="2.4" fill="#1a86f2"/><path d="M3.6 4.8 H12.4 M3.6 8 H12.4 M3.6 11.2 H9.6" stroke="#fff" stroke-width="1.6"/></svg>
<span class="t" style="left:883.84px;top:91.7px;font-size:12px;line-height:16px;color:#27262b;transform:scaleX(1.0012);">Handling electronic...</span>
<svg class="a" style="left:1015.8px;top:92px" width="16" height="16" viewBox="0 0 16 16" ><rect x="0.3" y="0.3" width="15.4" height="15.4" rx="2.4" fill="#1a86f2"/><path d="M3.6 4.8 H12.4 M3.6 8 H12.4 M3.6 11.2 H9.6" stroke="#fff" stroke-width="1.6"/></svg>
<span class="t" style="left:1037.64px;top:91.7px;font-size:12px;line-height:16px;color:#27262b;transform:scaleX(0.9728);">Electronics coolings...</span>
<svg class="a" style="left:1171px;top:92px" width="16" height="16" viewBox="0 0 16 16" ><defs><linearGradient id="cf1" x1="0" y1="0" x2="1" y2="0"><stop offset="0" stop-color="#0052cc"/><stop offset="1" stop-color="#2684ff"/></linearGradient><linearGradient id="cf2" x1="0" y1="0" x2="1" y2="0"><stop offset="0" stop-color="#2684ff"/><stop offset="1" stop-color="#0052cc"/></linearGradient></defs><path d="M2.3 0.3 L0.8 4.2 C 5 6.2, 7 7.6, 8.2 7.6 C 11 7.6, 13.6 6, 15.8 2.8 L12.4 0.3 C 11 2.4, 9.6 3.2, 8.4 3.2 C 7.2 3.2, 5 2, 2.3 0.3Z" fill="url(#cf1)"/><path d="M13.7 15.7 L15.2 11.8 C 11 9.8, 9 8.4, 7.8 8.4 C 5 8.4, 2.4 10, 0.2 13.2 L3.6 15.7 C 5 13.6, 6.4 12.8, 7.6 12.8 C 8.8 12.8, 11 14, 13.7 15.7Z" fill="url(#cf2)"/></svg>
<span class="t" style="left:1192.34px;top:91.7px;font-size:12px;line-height:16px;color:#27262b;transform:scaleX(0.9487);">CAD Team - SimScal...</span>
<svg class="a" style="left:1330.6px;top:93px" width="16.4" height="14" viewBox="0 0 16.4 14" ><path d="M1.2 2.6 a1.4 1.4 0 0 1 1.4 -1.4 h3.9 l1.7 1.9 h5.3 a1.4 1.4 0 0 1 1.4 1.4 v6.9 a1.4 1.4 0 0 1 -1.4 1.4 h-10.9 a1.4 1.4 0 0 1 -1.4 -1.4 z" fill="none" stroke="#444746" stroke-width="1.7" stroke-linejoin="round"/></svg>
<span class="t" style="left:1354.34px;top:91.7px;font-size:12px;line-height:16px;color:#27262b;transform:scaleX(0.9667);">CAD</span>
<svg class="a" style="left:1439.5px;top:95px" width="13" height="10" viewBox="0 0 13 10" ><path d="M1.4 1.2 L5.2 5 L1.4 8.8 M7 1.2 L10.8 5 L7 8.8" fill="none" stroke="#444746" stroke-width="1.7" stroke-linecap="round" stroke-linejoin="round"/></svg>
<div class="a" style="left:1467.5px;top:92px;width:2px;height:16px;background:#c2d7f7;border-radius:1px"></div>
<svg class="a" style="left:1485.8px;top:93px" width="16.4" height="14" viewBox="0 0 16.4 14" ><path d="M1.2 2.6 a1.4 1.4 0 0 1 1.4 -1.4 h3.9 l1.7 1.9 h5.3 a1.4 1.4 0 0 1 1.4 1.4 v6.9 a1.4 1.4 0 0 1 -1.4 1.4 h-10.9 a1.4 1.4 0 0 1 -1.4 -1.4 z" fill="none" stroke="#444746" stroke-width="1.7" stroke-linejoin="round"/></svg>
<span class="t" style="left:1509.34px;top:91.7px;font-size:12px;line-height:16px;color:#27262b;transform:scaleX(0.9963);">All Bookmarks</span>
</div></body></html>
